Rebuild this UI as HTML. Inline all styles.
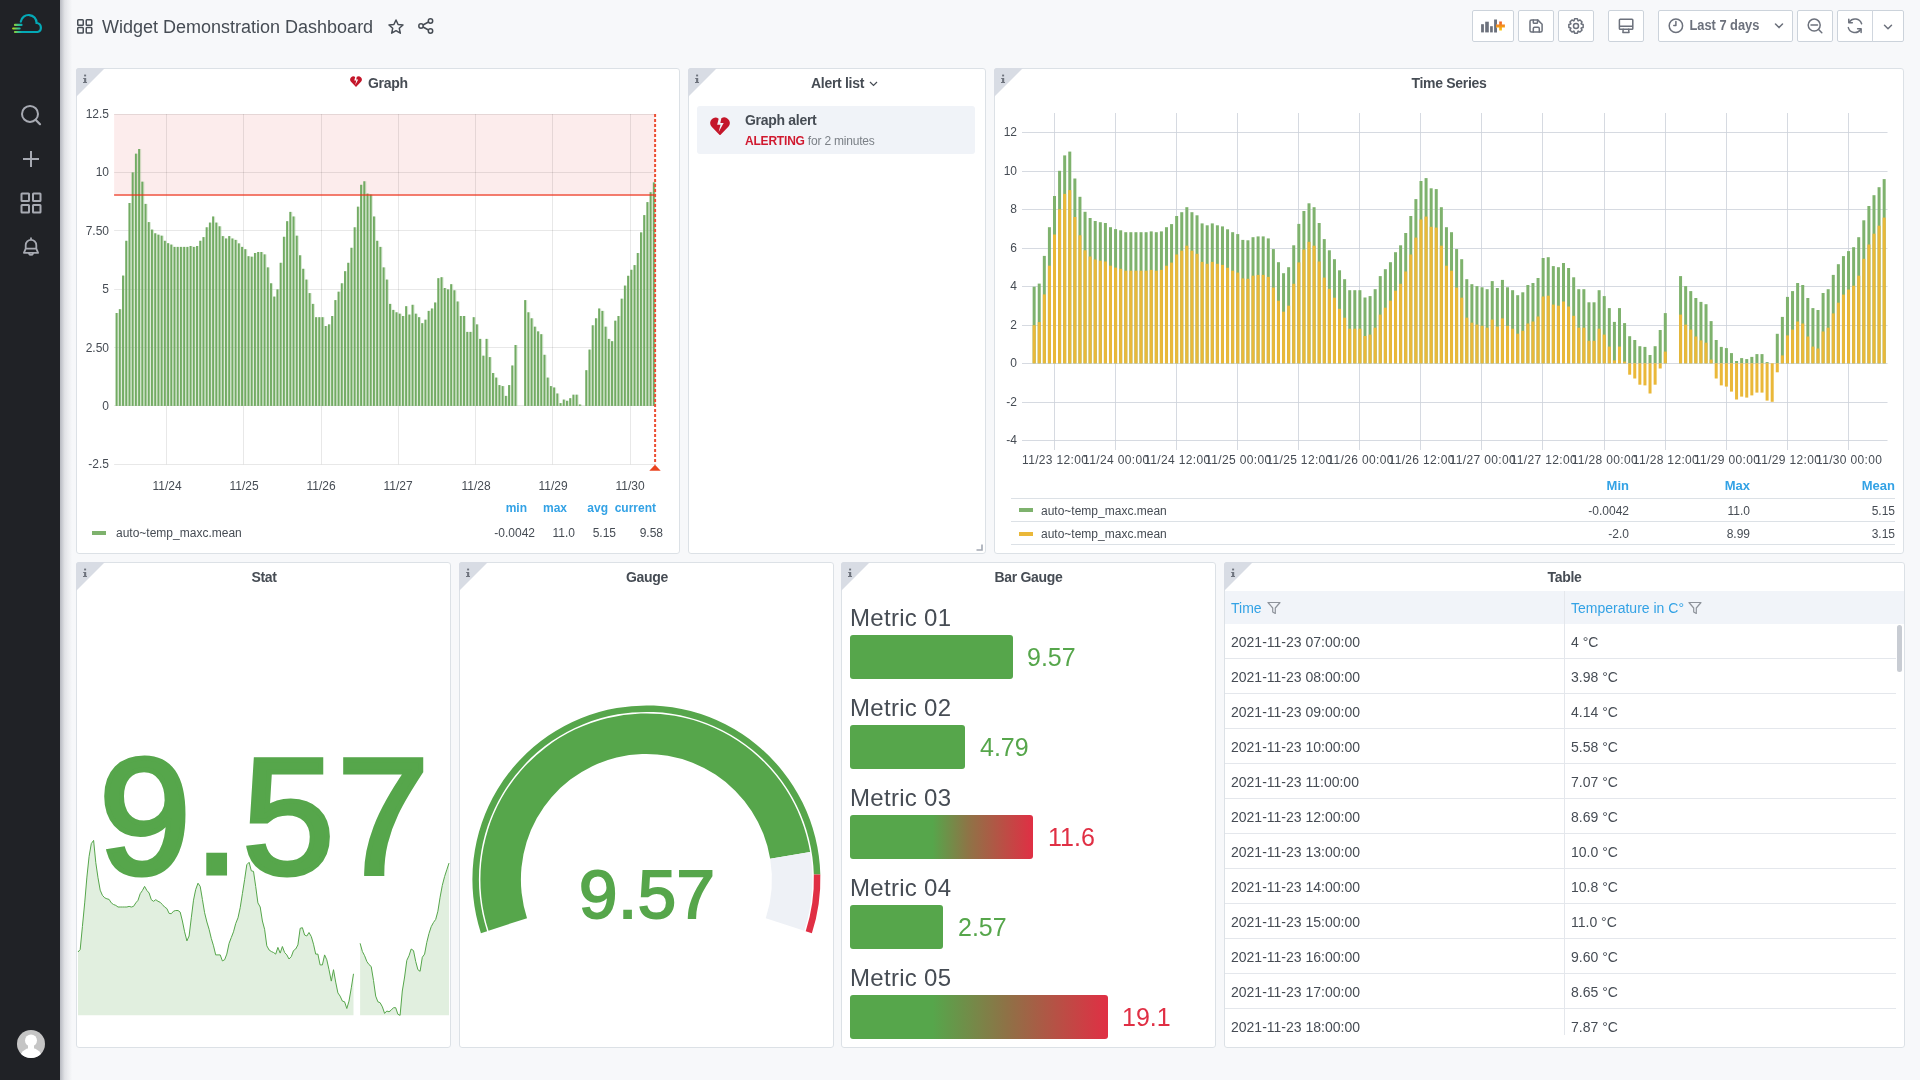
<!DOCTYPE html>
<html><head><meta charset="utf-8"><title>Widget Demonstration Dashboard</title>
<style>
*{box-sizing:border-box}
html,body{margin:0;padding:0;width:1920px;height:1080px;overflow:hidden;background:#f7f8fa;font-family:"Liberation Sans", sans-serif;color:#464c54}
#root{position:absolute;left:0;top:0;width:1920px;height:1080px;will-change:transform}
.abs{position:absolute}
.sidebar{position:absolute;left:0;top:0;width:60px;height:1080px;background:#202226}
.shadow{position:absolute;left:60px;top:0;width:12px;height:1080px;background:linear-gradient(to right,rgba(20,25,45,0.28),rgba(20,25,45,0.09) 40%,rgba(20,25,45,0))}
.panel{position:absolute;background:#fff;border:1px solid #dce1e6;border-radius:3px}
.corner{position:absolute;left:-1px;top:-1px;width:30px;height:30px}
.corner svg{position:absolute;left:0;top:0}
.ptitle{position:absolute;left:0;right:0;text-align:center;font-size:14px;font-weight:700;color:#464c54}
.tt{letter-spacing:-0.3px}
.btn{position:absolute;top:10px;height:32px;border:1px solid #ccd3db;border-radius:2px;background:#fff}
.t{position:absolute;white-space:pre}
</style></head><body><div id="root">

<div class="sidebar">
<svg class="abs" style="left:0;top:0" width="60" height="45" viewBox="0 0 60 45">
<defs><linearGradient id="lg" x1="13" y1="0" x2="22" y2="0" gradientUnits="userSpaceOnUse"><stop offset="0" stop-color="#b0d81a"/><stop offset="0.55" stop-color="#3cc48a"/><stop offset="1" stop-color="#04a9b6"/></linearGradient></defs>
<path d="M20.8 21.7 A7.95 7.95 0 0 1 36.6 23 A4.6 4.6 0 0 1 37.6 32 H22" fill="none" stroke="#04a9b6" stroke-width="2.2" stroke-linecap="round"/>
<path d="M15 32 H23 M15 24.9 H21.5 M13.2 28.5 H19.6" fill="none" stroke="url(#lg)" stroke-width="2.2" stroke-linecap="round"/>
</svg>
<svg class="abs" style="left:19px;top:104px" width="24" height="24" viewBox="0 0 24 24"><circle cx="11" cy="9.9" r="8" fill="none" stroke="#a7aab2" stroke-width="2"/><path d="M16.8 16 L21 20.2" stroke="#a7aab2" stroke-width="2.2" stroke-linecap="round"/></svg>
<svg class="abs" style="left:21px;top:149px" width="20" height="20" viewBox="0 0 20 20"><path d="M10 2 V18 M2 10 H18" stroke="#a7aab2" stroke-width="2"/></svg>
<svg class="abs" style="left:20px;top:192px" width="22" height="22" viewBox="0 0 22 22"><g fill="none" stroke="#a7aab2" stroke-width="2"><rect x="1.5" y="1.5" width="7.5" height="7.5" rx="0.5"/><rect x="13" y="1.5" width="7.5" height="7.5" rx="0.5"/><rect x="1.5" y="13" width="7.5" height="7.5" rx="0.5"/><rect x="13" y="13" width="7.5" height="7.5" rx="0.5"/></g></svg>
<svg class="abs" style="left:21px;top:236px" width="20" height="22" viewBox="0 0 20 22"><path d="M10 1.5 V3.8 M4.7 12.6 V9.2 A5.3 5.3 0 0 1 15.3 9.2 V12.6 M4.7 12.6 H15.3 L17.1 16.8 H2.9 Z M7.9 17.4 A2.2 2.2 0 0 0 12.1 17.4" fill="none" stroke="#a7aab2" stroke-width="1.8" stroke-linejoin="round"/></svg>
<svg class="abs" style="left:17px;top:1030px" width="28" height="28" viewBox="0 0 28 28"><defs><clipPath id="av"><circle cx="14" cy="14" r="14"/></clipPath></defs><circle cx="14" cy="14" r="14" fill="#c5c5c5"/><g clip-path="url(#av)" fill="#fff"><circle cx="14" cy="10.6" r="6"/><rect x="11" y="13" width="6" height="6"/><circle cx="14" cy="29.5" r="11.5"/></g></svg>
</div><div class="shadow"></div>
<svg class="abs" style="left:77px;top:19px" width="16" height="15" viewBox="0 0 16 15"><g fill="none" stroke="#464c54" stroke-width="1.5"><rect x="0.75" y="0.75" width="5.5" height="5.5" rx="0.8"/><rect x="9.25" y="0.75" width="5.5" height="5.5" rx="0.8"/><rect x="0.75" y="8.5" width="5.5" height="5.5" rx="0.8"/><rect x="9.25" y="8.5" width="5.5" height="5.5" rx="0.8"/></g></svg>
<div class="t" style="left:102px;top:15px;font-size:18px;line-height:24px;color:#464c54">Widget Demonstration Dashboard</div>
<svg class="abs" style="left:388px;top:19px" width="16" height="15" viewBox="0 0 16 15"><path d="M8 1 L10.1 5.5 L15 6 L11.3 9.3 L12.3 14.2 L8 11.7 L3.7 14.2 L4.7 9.3 L1 6 L5.9 5.5 Z" fill="none" stroke="#464c54" stroke-width="1.5" stroke-linejoin="round"/></svg>
<svg class="abs" style="left:418px;top:18px" width="16" height="16" viewBox="0 0 16 16"><g fill="none" stroke="#464c54" stroke-width="1.5"><circle cx="12.5" cy="3" r="2.2"/><circle cx="3" cy="8" r="2.2"/><circle cx="12.5" cy="13" r="2.2"/><path d="M5 7 L10.5 4 M5 9 L10.5 12"/></g></svg>
<div class="btn" style="left:1472px;width:42px"></div>
<div class="btn" style="left:1518px;width:36px"></div>
<div class="btn" style="left:1558px;width:36px"></div>
<div class="btn" style="left:1608px;width:36px"></div>
<div class="btn" style="left:1658px;width:135px"></div>
<div class="btn" style="left:1797px;width:36px"></div>
<div class="btn" style="left:1837px;width:67px"></div>
<div class="abs" style="left:1872px;top:10px;width:1px;height:32px;background:#d0d6de"></div>
<svg class="abs" style="left:0;top:0" width="1920" height="50" viewBox="0 0 1920 50">
<defs><linearGradient id="og" x1="0" y1="21.5" x2="0" y2="30.5" gradientUnits="userSpaceOnUse"><stop offset="0" stop-color="#f05a28"/><stop offset="0.5" stop-color="#f3901e"/><stop offset="1" stop-color="#fbca0a"/></linearGradient></defs>
<g fill="#6c717c"><rect x="1481.1" y="24.2" width="2.8" height="8.2"/><rect x="1485.2" y="21.7" width="3.6" height="10.7"/><rect x="1490.1" y="26.2" width="2.7" height="6.2"/><path d="M1494.1 19.4 H1497 V23.8 Q1495.6 26 1497 28.4 V32.4 H1494.1 Z"/></g>
<path d="M1499.2 21.6 H1501.9 V24.4 H1504.9 V27.6 H1501.9 V30.4 H1499.2 V27.6 H1496 V24.4 H1499.2 Z" fill="url(#og)"/>
<g fill="none" stroke="#6c717c" stroke-width="1.5" stroke-linejoin="round" stroke-linecap="round">
<path d="M1531.5 19.9 H1537.7 L1542.1 24.3 V30.6 Q1542.1 32.1 1540.6 32.1 H1531.5 Q1530 32.1 1530 30.6 V21.4 Q1530 19.9 1531.5 19.9 Z"/>
<path d="M1533.3 19.9 V22.5 Q1533.3 23.3 1534.1 23.3 H1536.7 Q1537.5 23.3 1537.5 22.5 V19.9"/>
<path d="M1533.3 32.1 V28.5 Q1533.3 27.3 1534.5 27.3 H1538.1 Q1539.3 27.3 1539.3 28.5 V32.1"/>
<path d="M1574.03 20.76 L1574.55 18.85 L1577.45 18.85 L1577.97 20.76 L1578.31 20.90 L1580.03 19.92 L1582.08 21.97 L1581.10 23.69 L1581.24 24.03 L1583.15 24.55 L1583.15 27.45 L1581.24 27.97 L1581.10 28.31 L1582.08 30.03 L1580.03 32.08 L1578.31 31.10 L1577.97 31.24 L1577.45 33.15 L1574.55 33.15 L1574.03 31.24 L1573.69 31.10 L1571.97 32.08 L1569.92 30.03 L1570.90 28.31 L1570.76 27.97 L1568.85 27.45 L1568.85 24.55 L1570.76 24.03 L1570.90 23.69 L1569.92 21.97 L1571.97 19.92 L1573.69 20.90 Z"/>
<circle cx="1576" cy="26" r="2.5"/>
<path d="M1620.2 19.2 H1632 Q1632.8 19.2 1632.8 20 V28.4 Q1632.8 29.2 1632 29.2 H1620.2 Q1619.4 29.2 1619.4 28.4 V20 Q1619.4 19.2 1620.2 19.2 Z M1619.4 26.3 H1632.8"/>
<path d="M1623.2 29.2 L1622.9 32.6 H1629 L1628.6 29.2"/>
<circle cx="1675.9" cy="25.8" r="6.7"/>
<path d="M1675.9 21.6 V25.4 H1673.8"/>
<path d="M1775.5 24 L1779 27.6 L1782.5 24"/>
<circle cx="1814.2" cy="25.1" r="6"/>
<path d="M1811 25.1 H1817.5 M1818.6 29.5 L1821.8 32.7"/>
<path d="M1861.6 23.8 A6.9 6.9 0 0 0 1849.3 22 M1848.3 27.6 A6.9 6.9 0 0 0 1860.6 29.5"/>
<path d="M1848.8 19.2 V22.8 H1852.3 M1861.1 32.4 V28.8 H1857.6"/>
<path d="M1884.5 25.3 L1888 28.7 L1891.5 25.3"/>
</g>
<text x="1689.4" y="30.1" font-family="Liberation Sans" font-weight="700" font-size="14" fill="#6c717c" textLength="70" lengthAdjust="spacingAndGlyphs">Last 7 days</text>
</svg>
<div class="panel" style="left:76px;top:68px;width:604px;height:486px"><div class="corner"><svg width="30" height="30" viewBox="0 0 30 30"><path d="M0 3 A3 3 0 0 1 3 0 H29 L0 29 Z" fill="#d8dce4"/><g fill="#6e737d"><rect x="8.1" y="6.6" width="2" height="1.8"/><path d="M7.2 10 H10.2 V14 H11 V15 H7 V14 H8.1 V11 H7.2 Z"/></g></svg></div>
</div>
<div class="t tt" style="left:368px;top:75px;font-size:14px;font-weight:700;line-height:16px">Graph</div>
<svg class="abs" style="left:350px;top:76px" width="12.0" height="11.0" viewBox="0 0 12 11"><path d="M6 11 L1 5.8 A3.1 3.1 0 0 1 1.2 1.2 A3.2 3.2 0 0 1 5.2 1 L4.3 4.6 L6.3 4.6 L5.2 9 L8.2 3.6 L6.2 3.6 L6.8 0.8 A3.2 3.2 0 0 1 10.8 1.2 A3.1 3.1 0 0 1 11 5.8 Z" fill="#c4162a"/></svg>
<svg class="abs" style="left:0;top:0" width="1920" height="1080" viewBox="0 0 1920 1080"><rect x="114.1" y="114.02499999999998" width="541.1999999999999" height="81.725" fill="rgba(234,112,112,0.13)"/><path d="M114.1 114.5 H655.3" stroke="rgba(0,0,0,0.09)" stroke-width="1"/><path d="M114.1 172.5 H655.3" stroke="rgba(0,0,0,0.09)" stroke-width="1"/><path d="M114.1 230.5 H655.3" stroke="rgba(0,0,0,0.09)" stroke-width="1"/><path d="M114.1 289.5 H655.3" stroke="rgba(0,0,0,0.09)" stroke-width="1"/><path d="M114.1 347.5 H655.3" stroke="rgba(0,0,0,0.09)" stroke-width="1"/><path d="M114.1 405.5 H655.3" stroke="rgba(0,0,0,0.09)" stroke-width="1"/><path d="M114.1 464.5 H655.3" stroke="rgba(0,0,0,0.09)" stroke-width="1"/><path d="M166.5 114.02499999999998 V464.275" stroke="rgba(0,0,0,0.09)" stroke-width="1"/><path d="M243.5 114.02499999999998 V464.275" stroke="rgba(0,0,0,0.09)" stroke-width="1"/><path d="M321.5 114.02499999999998 V464.275" stroke="rgba(0,0,0,0.09)" stroke-width="1"/><path d="M398.5 114.02499999999998 V464.275" stroke="rgba(0,0,0,0.09)" stroke-width="1"/><path d="M475.5 114.02499999999998 V464.275" stroke="rgba(0,0,0,0.09)" stroke-width="1"/><path d="M552.5 114.02499999999998 V464.275" stroke="rgba(0,0,0,0.09)" stroke-width="1"/><path d="M630.5 114.02499999999998 V464.275" stroke="rgba(0,0,0,0.09)" stroke-width="1"/><rect x="115.63" y="313.0" width="3.0" height="92.9" fill="rgba(126,178,109,0.3)"/><rect x="115.63" y="313.0" width="1.9" height="92.9" fill="#72ab63"/><rect x="118.85" y="309.2" width="3.0" height="96.7" fill="rgba(126,178,109,0.3)"/><rect x="118.85" y="309.2" width="1.9" height="96.7" fill="#72ab63"/><rect x="122.06" y="275.6" width="3.0" height="130.3" fill="rgba(126,178,109,0.3)"/><rect x="122.06" y="275.6" width="1.9" height="130.3" fill="#72ab63"/><rect x="125.28" y="240.8" width="3.0" height="165.1" fill="rgba(126,178,109,0.3)"/><rect x="125.28" y="240.8" width="1.9" height="165.1" fill="#72ab63"/><rect x="128.50" y="203.0" width="3.0" height="202.9" fill="rgba(126,178,109,0.3)"/><rect x="128.50" y="203.0" width="1.9" height="202.9" fill="#72ab63"/><rect x="131.71" y="172.4" width="3.0" height="233.5" fill="rgba(126,178,109,0.3)"/><rect x="131.71" y="172.4" width="1.9" height="233.5" fill="#72ab63"/><rect x="134.93" y="153.7" width="3.0" height="252.2" fill="rgba(126,178,109,0.3)"/><rect x="134.93" y="153.7" width="1.9" height="252.2" fill="#72ab63"/><rect x="138.15" y="149.0" width="3.0" height="256.9" fill="rgba(126,178,109,0.3)"/><rect x="138.15" y="149.0" width="1.9" height="256.9" fill="#72ab63"/><rect x="141.36" y="181.7" width="3.0" height="224.2" fill="rgba(126,178,109,0.3)"/><rect x="141.36" y="181.7" width="1.9" height="224.2" fill="#72ab63"/><rect x="144.58" y="203.9" width="3.0" height="202.0" fill="rgba(126,178,109,0.3)"/><rect x="144.58" y="203.9" width="1.9" height="202.0" fill="#72ab63"/><rect x="147.80" y="222.1" width="3.0" height="183.8" fill="rgba(126,178,109,0.3)"/><rect x="147.80" y="222.1" width="1.9" height="183.8" fill="#72ab63"/><rect x="151.01" y="229.6" width="3.0" height="176.3" fill="rgba(126,178,109,0.3)"/><rect x="151.01" y="229.6" width="1.9" height="176.3" fill="#72ab63"/><rect x="154.23" y="233.3" width="3.0" height="172.6" fill="rgba(126,178,109,0.3)"/><rect x="154.23" y="233.3" width="1.9" height="172.6" fill="#72ab63"/><rect x="157.45" y="234.7" width="3.0" height="171.2" fill="rgba(126,178,109,0.3)"/><rect x="157.45" y="234.7" width="1.9" height="171.2" fill="#72ab63"/><rect x="160.67" y="235.7" width="3.0" height="170.2" fill="rgba(126,178,109,0.3)"/><rect x="160.67" y="235.7" width="1.9" height="170.2" fill="#72ab63"/><rect x="163.88" y="240.8" width="3.0" height="165.1" fill="rgba(126,178,109,0.3)"/><rect x="163.88" y="240.8" width="1.9" height="165.1" fill="#72ab63"/><rect x="167.10" y="243.2" width="3.0" height="162.7" fill="rgba(126,178,109,0.3)"/><rect x="167.10" y="243.2" width="1.9" height="162.7" fill="#72ab63"/><rect x="170.32" y="244.6" width="3.0" height="161.3" fill="rgba(126,178,109,0.3)"/><rect x="170.32" y="244.6" width="1.9" height="161.3" fill="#72ab63"/><rect x="173.53" y="246.9" width="3.0" height="159.0" fill="rgba(126,178,109,0.3)"/><rect x="173.53" y="246.9" width="1.9" height="159.0" fill="#72ab63"/><rect x="176.75" y="246.9" width="3.0" height="159.0" fill="rgba(126,178,109,0.3)"/><rect x="176.75" y="246.9" width="1.9" height="159.0" fill="#72ab63"/><rect x="179.97" y="246.9" width="3.0" height="159.0" fill="rgba(126,178,109,0.3)"/><rect x="179.97" y="246.9" width="1.9" height="159.0" fill="#72ab63"/><rect x="183.19" y="246.9" width="3.0" height="159.0" fill="rgba(126,178,109,0.3)"/><rect x="183.19" y="246.9" width="1.9" height="159.0" fill="#72ab63"/><rect x="186.40" y="246.9" width="3.0" height="159.0" fill="rgba(126,178,109,0.3)"/><rect x="186.40" y="246.9" width="1.9" height="159.0" fill="#72ab63"/><rect x="189.62" y="246.0" width="3.0" height="159.9" fill="rgba(126,178,109,0.3)"/><rect x="189.62" y="246.0" width="1.9" height="159.9" fill="#72ab63"/><rect x="192.84" y="246.9" width="3.0" height="159.0" fill="rgba(126,178,109,0.3)"/><rect x="192.84" y="246.9" width="1.9" height="159.0" fill="#72ab63"/><rect x="196.05" y="246.0" width="3.0" height="159.9" fill="rgba(126,178,109,0.3)"/><rect x="196.05" y="246.0" width="1.9" height="159.9" fill="#72ab63"/><rect x="199.27" y="240.8" width="3.0" height="165.1" fill="rgba(126,178,109,0.3)"/><rect x="199.27" y="240.8" width="1.9" height="165.1" fill="#72ab63"/><rect x="202.49" y="237.1" width="3.0" height="168.8" fill="rgba(126,178,109,0.3)"/><rect x="202.49" y="237.1" width="1.9" height="168.8" fill="#72ab63"/><rect x="205.70" y="227.3" width="3.0" height="178.6" fill="rgba(126,178,109,0.3)"/><rect x="205.70" y="227.3" width="1.9" height="178.6" fill="#72ab63"/><rect x="208.92" y="222.6" width="3.0" height="183.3" fill="rgba(126,178,109,0.3)"/><rect x="208.92" y="222.6" width="1.9" height="183.3" fill="#72ab63"/><rect x="212.14" y="216.5" width="3.0" height="189.4" fill="rgba(126,178,109,0.3)"/><rect x="212.14" y="216.5" width="1.9" height="189.4" fill="#72ab63"/><rect x="215.35" y="222.6" width="3.0" height="183.3" fill="rgba(126,178,109,0.3)"/><rect x="215.35" y="222.6" width="1.9" height="183.3" fill="#72ab63"/><rect x="218.57" y="226.3" width="3.0" height="179.6" fill="rgba(126,178,109,0.3)"/><rect x="218.57" y="226.3" width="1.9" height="179.6" fill="#72ab63"/><rect x="221.79" y="236.1" width="3.0" height="169.8" fill="rgba(126,178,109,0.3)"/><rect x="221.79" y="236.1" width="1.9" height="169.8" fill="#72ab63"/><rect x="225.01" y="238.5" width="3.0" height="167.4" fill="rgba(126,178,109,0.3)"/><rect x="225.01" y="238.5" width="1.9" height="167.4" fill="#72ab63"/><rect x="228.22" y="236.1" width="3.0" height="169.8" fill="rgba(126,178,109,0.3)"/><rect x="228.22" y="236.1" width="1.9" height="169.8" fill="#72ab63"/><rect x="231.44" y="238.5" width="3.0" height="167.4" fill="rgba(126,178,109,0.3)"/><rect x="231.44" y="238.5" width="1.9" height="167.4" fill="#72ab63"/><rect x="234.66" y="239.9" width="3.0" height="166.0" fill="rgba(126,178,109,0.3)"/><rect x="234.66" y="239.9" width="1.9" height="166.0" fill="#72ab63"/><rect x="237.87" y="243.4" width="3.0" height="162.5" fill="rgba(126,178,109,0.3)"/><rect x="237.87" y="243.4" width="1.9" height="162.5" fill="#72ab63"/><rect x="241.09" y="246.9" width="3.0" height="159.0" fill="rgba(126,178,109,0.3)"/><rect x="241.09" y="246.9" width="1.9" height="159.0" fill="#72ab63"/><rect x="244.31" y="249.2" width="3.0" height="156.7" fill="rgba(126,178,109,0.3)"/><rect x="244.31" y="249.2" width="1.9" height="156.7" fill="#72ab63"/><rect x="247.52" y="256.2" width="3.0" height="149.7" fill="rgba(126,178,109,0.3)"/><rect x="247.52" y="256.2" width="1.9" height="149.7" fill="#72ab63"/><rect x="250.74" y="256.7" width="3.0" height="149.2" fill="rgba(126,178,109,0.3)"/><rect x="250.74" y="256.7" width="1.9" height="149.2" fill="#72ab63"/><rect x="253.96" y="253.0" width="3.0" height="152.9" fill="rgba(126,178,109,0.3)"/><rect x="253.96" y="253.0" width="1.9" height="152.9" fill="#72ab63"/><rect x="257.18" y="252.0" width="3.0" height="153.9" fill="rgba(126,178,109,0.3)"/><rect x="257.18" y="252.0" width="1.9" height="153.9" fill="#72ab63"/><rect x="260.39" y="252.0" width="3.0" height="153.9" fill="rgba(126,178,109,0.3)"/><rect x="260.39" y="252.0" width="1.9" height="153.9" fill="#72ab63"/><rect x="263.61" y="254.4" width="3.0" height="151.5" fill="rgba(126,178,109,0.3)"/><rect x="263.61" y="254.4" width="1.9" height="151.5" fill="#72ab63"/><rect x="266.83" y="267.4" width="3.0" height="138.5" fill="rgba(126,178,109,0.3)"/><rect x="266.83" y="267.4" width="1.9" height="138.5" fill="#72ab63"/><rect x="270.04" y="283.3" width="3.0" height="122.6" fill="rgba(126,178,109,0.3)"/><rect x="270.04" y="283.3" width="1.9" height="122.6" fill="#72ab63"/><rect x="273.26" y="296.6" width="3.0" height="109.3" fill="rgba(126,178,109,0.3)"/><rect x="273.26" y="296.6" width="1.9" height="109.3" fill="#72ab63"/><rect x="276.48" y="289.4" width="3.0" height="116.5" fill="rgba(126,178,109,0.3)"/><rect x="276.48" y="289.4" width="1.9" height="116.5" fill="#72ab63"/><rect x="279.69" y="262.8" width="3.0" height="143.1" fill="rgba(126,178,109,0.3)"/><rect x="279.69" y="262.8" width="1.9" height="143.1" fill="#72ab63"/><rect x="282.91" y="236.8" width="3.0" height="169.1" fill="rgba(126,178,109,0.3)"/><rect x="282.91" y="236.8" width="1.9" height="169.1" fill="#72ab63"/><rect x="286.13" y="221.2" width="3.0" height="184.7" fill="rgba(126,178,109,0.3)"/><rect x="286.13" y="221.2" width="1.9" height="184.7" fill="#72ab63"/><rect x="289.35" y="211.9" width="3.0" height="194.0" fill="rgba(126,178,109,0.3)"/><rect x="289.35" y="211.9" width="1.9" height="194.0" fill="#72ab63"/><rect x="292.56" y="216.5" width="3.0" height="189.4" fill="rgba(126,178,109,0.3)"/><rect x="292.56" y="216.5" width="1.9" height="189.4" fill="#72ab63"/><rect x="295.78" y="235.7" width="3.0" height="170.2" fill="rgba(126,178,109,0.3)"/><rect x="295.78" y="235.7" width="1.9" height="170.2" fill="#72ab63"/><rect x="299.00" y="255.3" width="3.0" height="150.6" fill="rgba(126,178,109,0.3)"/><rect x="299.00" y="255.3" width="1.9" height="150.6" fill="#72ab63"/><rect x="302.21" y="268.8" width="3.0" height="137.1" fill="rgba(126,178,109,0.3)"/><rect x="302.21" y="268.8" width="1.9" height="137.1" fill="#72ab63"/><rect x="305.43" y="279.6" width="3.0" height="126.3" fill="rgba(126,178,109,0.3)"/><rect x="305.43" y="279.6" width="1.9" height="126.3" fill="#72ab63"/><rect x="308.65" y="293.1" width="3.0" height="112.8" fill="rgba(126,178,109,0.3)"/><rect x="308.65" y="293.1" width="1.9" height="112.8" fill="#72ab63"/><rect x="311.87" y="303.9" width="3.0" height="102.0" fill="rgba(126,178,109,0.3)"/><rect x="311.87" y="303.9" width="1.9" height="102.0" fill="#72ab63"/><rect x="315.08" y="317.2" width="3.0" height="88.7" fill="rgba(126,178,109,0.3)"/><rect x="315.08" y="317.2" width="1.9" height="88.7" fill="#72ab63"/><rect x="318.30" y="317.2" width="3.0" height="88.7" fill="rgba(126,178,109,0.3)"/><rect x="318.30" y="317.2" width="1.9" height="88.7" fill="#72ab63"/><rect x="321.52" y="317.2" width="3.0" height="88.7" fill="rgba(126,178,109,0.3)"/><rect x="321.52" y="317.2" width="1.9" height="88.7" fill="#72ab63"/><rect x="324.73" y="326.0" width="3.0" height="79.9" fill="rgba(126,178,109,0.3)"/><rect x="324.73" y="326.0" width="1.9" height="79.9" fill="#72ab63"/><rect x="327.95" y="324.4" width="3.0" height="81.5" fill="rgba(126,178,109,0.3)"/><rect x="327.95" y="324.4" width="1.9" height="81.5" fill="#72ab63"/><rect x="331.17" y="316.0" width="3.0" height="89.9" fill="rgba(126,178,109,0.3)"/><rect x="331.17" y="316.0" width="1.9" height="89.9" fill="#72ab63"/><rect x="334.38" y="300.1" width="3.0" height="105.8" fill="rgba(126,178,109,0.3)"/><rect x="334.38" y="300.1" width="1.9" height="105.8" fill="#72ab63"/><rect x="337.60" y="291.7" width="3.0" height="114.2" fill="rgba(126,178,109,0.3)"/><rect x="337.60" y="291.7" width="1.9" height="114.2" fill="#72ab63"/><rect x="340.82" y="283.3" width="3.0" height="122.6" fill="rgba(126,178,109,0.3)"/><rect x="340.82" y="283.3" width="1.9" height="122.6" fill="#72ab63"/><rect x="344.04" y="271.2" width="3.0" height="134.7" fill="rgba(126,178,109,0.3)"/><rect x="344.04" y="271.2" width="1.9" height="134.7" fill="#72ab63"/><rect x="347.25" y="262.8" width="3.0" height="143.1" fill="rgba(126,178,109,0.3)"/><rect x="347.25" y="262.8" width="1.9" height="143.1" fill="#72ab63"/><rect x="350.47" y="247.8" width="3.0" height="158.1" fill="rgba(126,178,109,0.3)"/><rect x="350.47" y="247.8" width="1.9" height="158.1" fill="#72ab63"/><rect x="353.69" y="227.3" width="3.0" height="178.6" fill="rgba(126,178,109,0.3)"/><rect x="353.69" y="227.3" width="1.9" height="178.6" fill="#72ab63"/><rect x="356.90" y="206.7" width="3.0" height="199.2" fill="rgba(126,178,109,0.3)"/><rect x="356.90" y="206.7" width="1.9" height="199.2" fill="#72ab63"/><rect x="360.12" y="184.8" width="3.0" height="221.1" fill="rgba(126,178,109,0.3)"/><rect x="360.12" y="184.8" width="1.9" height="221.1" fill="#72ab63"/><rect x="363.34" y="181.3" width="3.0" height="224.6" fill="rgba(126,178,109,0.3)"/><rect x="363.34" y="181.3" width="1.9" height="224.6" fill="#72ab63"/><rect x="366.55" y="193.6" width="3.0" height="212.3" fill="rgba(126,178,109,0.3)"/><rect x="366.55" y="193.6" width="1.9" height="212.3" fill="#72ab63"/><rect x="369.77" y="194.6" width="3.0" height="211.3" fill="rgba(126,178,109,0.3)"/><rect x="369.77" y="194.6" width="1.9" height="211.3" fill="#72ab63"/><rect x="372.99" y="216.5" width="3.0" height="189.4" fill="rgba(126,178,109,0.3)"/><rect x="372.99" y="216.5" width="1.9" height="189.4" fill="#72ab63"/><rect x="376.20" y="240.8" width="3.0" height="165.1" fill="rgba(126,178,109,0.3)"/><rect x="376.20" y="240.8" width="1.9" height="165.1" fill="#72ab63"/><rect x="379.42" y="246.9" width="3.0" height="159.0" fill="rgba(126,178,109,0.3)"/><rect x="379.42" y="246.9" width="1.9" height="159.0" fill="#72ab63"/><rect x="382.64" y="267.4" width="3.0" height="138.5" fill="rgba(126,178,109,0.3)"/><rect x="382.64" y="267.4" width="1.9" height="138.5" fill="#72ab63"/><rect x="385.86" y="279.6" width="3.0" height="126.3" fill="rgba(126,178,109,0.3)"/><rect x="385.86" y="279.6" width="1.9" height="126.3" fill="#72ab63"/><rect x="389.07" y="303.9" width="3.0" height="102.0" fill="rgba(126,178,109,0.3)"/><rect x="389.07" y="303.9" width="1.9" height="102.0" fill="#72ab63"/><rect x="392.29" y="309.9" width="3.0" height="96.0" fill="rgba(126,178,109,0.3)"/><rect x="392.29" y="309.9" width="1.9" height="96.0" fill="#72ab63"/><rect x="395.51" y="312.3" width="3.0" height="93.6" fill="rgba(126,178,109,0.3)"/><rect x="395.51" y="312.3" width="1.9" height="93.6" fill="#72ab63"/><rect x="398.72" y="313.7" width="3.0" height="92.2" fill="rgba(126,178,109,0.3)"/><rect x="398.72" y="313.7" width="1.9" height="92.2" fill="#72ab63"/><rect x="401.94" y="316.0" width="3.0" height="89.9" fill="rgba(126,178,109,0.3)"/><rect x="401.94" y="316.0" width="1.9" height="89.9" fill="#72ab63"/><rect x="405.16" y="306.2" width="3.0" height="99.7" fill="rgba(126,178,109,0.3)"/><rect x="405.16" y="306.2" width="1.9" height="99.7" fill="#72ab63"/><rect x="408.38" y="314.6" width="3.0" height="91.3" fill="rgba(126,178,109,0.3)"/><rect x="408.38" y="314.6" width="1.9" height="91.3" fill="#72ab63"/><rect x="411.59" y="304.8" width="3.0" height="101.1" fill="rgba(126,178,109,0.3)"/><rect x="411.59" y="304.8" width="1.9" height="101.1" fill="#72ab63"/><rect x="414.81" y="313.7" width="3.0" height="92.2" fill="rgba(126,178,109,0.3)"/><rect x="414.81" y="313.7" width="1.9" height="92.2" fill="#72ab63"/><rect x="418.03" y="317.2" width="3.0" height="88.7" fill="rgba(126,178,109,0.3)"/><rect x="418.03" y="317.2" width="1.9" height="88.7" fill="#72ab63"/><rect x="421.24" y="323.2" width="3.0" height="82.7" fill="rgba(126,178,109,0.3)"/><rect x="421.24" y="323.2" width="1.9" height="82.7" fill="#72ab63"/><rect x="424.46" y="319.7" width="3.0" height="86.2" fill="rgba(126,178,109,0.3)"/><rect x="424.46" y="319.7" width="1.9" height="86.2" fill="#72ab63"/><rect x="427.68" y="310.9" width="3.0" height="95.0" fill="rgba(126,178,109,0.3)"/><rect x="427.68" y="310.9" width="1.9" height="95.0" fill="#72ab63"/><rect x="430.89" y="308.5" width="3.0" height="97.4" fill="rgba(126,178,109,0.3)"/><rect x="430.89" y="308.5" width="1.9" height="97.4" fill="#72ab63"/><rect x="434.11" y="302.5" width="3.0" height="103.4" fill="rgba(126,178,109,0.3)"/><rect x="434.11" y="302.5" width="1.9" height="103.4" fill="#72ab63"/><rect x="437.33" y="278.2" width="3.0" height="127.7" fill="rgba(126,178,109,0.3)"/><rect x="437.33" y="278.2" width="1.9" height="127.7" fill="#72ab63"/><rect x="440.55" y="277.2" width="3.0" height="128.7" fill="rgba(126,178,109,0.3)"/><rect x="440.55" y="277.2" width="1.9" height="128.7" fill="#72ab63"/><rect x="443.76" y="288.0" width="3.0" height="117.9" fill="rgba(126,178,109,0.3)"/><rect x="443.76" y="288.0" width="1.9" height="117.9" fill="#72ab63"/><rect x="446.98" y="289.4" width="3.0" height="116.5" fill="rgba(126,178,109,0.3)"/><rect x="446.98" y="289.4" width="1.9" height="116.5" fill="#72ab63"/><rect x="450.20" y="284.2" width="3.0" height="121.7" fill="rgba(126,178,109,0.3)"/><rect x="450.20" y="284.2" width="1.9" height="121.7" fill="#72ab63"/><rect x="453.41" y="290.3" width="3.0" height="115.6" fill="rgba(126,178,109,0.3)"/><rect x="453.41" y="290.3" width="1.9" height="115.6" fill="#72ab63"/><rect x="456.63" y="301.5" width="3.0" height="104.4" fill="rgba(126,178,109,0.3)"/><rect x="456.63" y="301.5" width="1.9" height="104.4" fill="#72ab63"/><rect x="459.85" y="316.0" width="3.0" height="89.9" fill="rgba(126,178,109,0.3)"/><rect x="459.85" y="316.0" width="1.9" height="89.9" fill="#72ab63"/><rect x="463.06" y="316.0" width="3.0" height="89.9" fill="rgba(126,178,109,0.3)"/><rect x="463.06" y="316.0" width="1.9" height="89.9" fill="#72ab63"/><rect x="466.28" y="331.9" width="3.0" height="74.0" fill="rgba(126,178,109,0.3)"/><rect x="466.28" y="331.9" width="1.9" height="74.0" fill="#72ab63"/><rect x="469.50" y="331.9" width="3.0" height="74.0" fill="rgba(126,178,109,0.3)"/><rect x="469.50" y="331.9" width="1.9" height="74.0" fill="#72ab63"/><rect x="472.71" y="317.2" width="3.0" height="88.7" fill="rgba(126,178,109,0.3)"/><rect x="472.71" y="317.2" width="1.9" height="88.7" fill="#72ab63"/><rect x="475.93" y="324.4" width="3.0" height="81.5" fill="rgba(126,178,109,0.3)"/><rect x="475.93" y="324.4" width="1.9" height="81.5" fill="#72ab63"/><rect x="479.15" y="338.9" width="3.0" height="67.0" fill="rgba(126,178,109,0.3)"/><rect x="479.15" y="338.9" width="1.9" height="67.0" fill="#72ab63"/><rect x="482.37" y="355.7" width="3.0" height="50.2" fill="rgba(126,178,109,0.3)"/><rect x="482.37" y="355.7" width="1.9" height="50.2" fill="#72ab63"/><rect x="485.58" y="338.9" width="3.0" height="67.0" fill="rgba(126,178,109,0.3)"/><rect x="485.58" y="338.9" width="1.9" height="67.0" fill="#72ab63"/><rect x="488.80" y="357.1" width="3.0" height="48.8" fill="rgba(126,178,109,0.3)"/><rect x="488.80" y="357.1" width="1.9" height="48.8" fill="#72ab63"/><rect x="492.02" y="373.0" width="3.0" height="32.9" fill="rgba(126,178,109,0.3)"/><rect x="492.02" y="373.0" width="1.9" height="32.9" fill="#72ab63"/><rect x="495.23" y="377.6" width="3.0" height="28.3" fill="rgba(126,178,109,0.3)"/><rect x="495.23" y="377.6" width="1.9" height="28.3" fill="#72ab63"/><rect x="498.45" y="385.1" width="3.0" height="20.8" fill="rgba(126,178,109,0.3)"/><rect x="498.45" y="385.1" width="1.9" height="20.8" fill="#72ab63"/><rect x="501.67" y="386.1" width="3.0" height="19.8" fill="rgba(126,178,109,0.3)"/><rect x="501.67" y="386.1" width="1.9" height="19.8" fill="#72ab63"/><rect x="504.89" y="395.9" width="3.0" height="10.0" fill="rgba(126,178,109,0.3)"/><rect x="504.89" y="395.9" width="1.9" height="10.0" fill="#72ab63"/><rect x="508.10" y="385.1" width="3.0" height="20.8" fill="rgba(126,178,109,0.3)"/><rect x="508.10" y="385.1" width="1.9" height="20.8" fill="#72ab63"/><rect x="511.32" y="365.5" width="3.0" height="40.4" fill="rgba(126,178,109,0.3)"/><rect x="511.32" y="365.5" width="1.9" height="40.4" fill="#72ab63"/><rect x="514.54" y="345.0" width="3.0" height="60.9" fill="rgba(126,178,109,0.3)"/><rect x="514.54" y="345.0" width="1.9" height="60.9" fill="#72ab63"/><rect x="524.19" y="300.1" width="3.0" height="105.8" fill="rgba(126,178,109,0.3)"/><rect x="524.19" y="300.1" width="1.9" height="105.8" fill="#72ab63"/><rect x="527.40" y="312.3" width="3.0" height="93.6" fill="rgba(126,178,109,0.3)"/><rect x="527.40" y="312.3" width="1.9" height="93.6" fill="#72ab63"/><rect x="530.62" y="318.3" width="3.0" height="87.6" fill="rgba(126,178,109,0.3)"/><rect x="530.62" y="318.3" width="1.9" height="87.6" fill="#72ab63"/><rect x="533.84" y="326.7" width="3.0" height="79.2" fill="rgba(126,178,109,0.3)"/><rect x="533.84" y="326.7" width="1.9" height="79.2" fill="#72ab63"/><rect x="537.06" y="331.4" width="3.0" height="74.5" fill="rgba(126,178,109,0.3)"/><rect x="537.06" y="331.4" width="1.9" height="74.5" fill="#72ab63"/><rect x="540.27" y="334.2" width="3.0" height="71.7" fill="rgba(126,178,109,0.3)"/><rect x="540.27" y="334.2" width="1.9" height="71.7" fill="#72ab63"/><rect x="543.49" y="354.8" width="3.0" height="51.1" fill="rgba(126,178,109,0.3)"/><rect x="543.49" y="354.8" width="1.9" height="51.1" fill="#72ab63"/><rect x="546.71" y="377.6" width="3.0" height="28.3" fill="rgba(126,178,109,0.3)"/><rect x="546.71" y="377.6" width="1.9" height="28.3" fill="#72ab63"/><rect x="549.92" y="386.1" width="3.0" height="19.8" fill="rgba(126,178,109,0.3)"/><rect x="549.92" y="386.1" width="1.9" height="19.8" fill="#72ab63"/><rect x="553.14" y="387.5" width="3.0" height="18.4" fill="rgba(126,178,109,0.3)"/><rect x="553.14" y="387.5" width="1.9" height="18.4" fill="#72ab63"/><rect x="556.36" y="393.5" width="3.0" height="12.4" fill="rgba(126,178,109,0.3)"/><rect x="556.36" y="393.5" width="1.9" height="12.4" fill="#72ab63"/><rect x="559.57" y="403.1" width="3.0" height="2.8" fill="rgba(126,178,109,0.3)"/><rect x="559.57" y="403.1" width="1.9" height="2.8" fill="#72ab63"/><rect x="562.79" y="399.6" width="3.0" height="6.3" fill="rgba(126,178,109,0.3)"/><rect x="562.79" y="399.6" width="1.9" height="6.3" fill="#72ab63"/><rect x="566.01" y="400.8" width="3.0" height="5.1" fill="rgba(126,178,109,0.3)"/><rect x="566.01" y="400.8" width="1.9" height="5.1" fill="#72ab63"/><rect x="569.23" y="398.2" width="3.0" height="7.7" fill="rgba(126,178,109,0.3)"/><rect x="569.23" y="398.2" width="1.9" height="7.7" fill="#72ab63"/><rect x="572.44" y="394.7" width="3.0" height="11.2" fill="rgba(126,178,109,0.3)"/><rect x="572.44" y="394.7" width="1.9" height="11.2" fill="#72ab63"/><rect x="575.66" y="394.7" width="3.0" height="11.2" fill="rgba(126,178,109,0.3)"/><rect x="575.66" y="394.7" width="1.9" height="11.2" fill="#72ab63"/><rect x="578.88" y="404.5" width="3.0" height="1.4" fill="rgba(126,178,109,0.3)"/><rect x="578.88" y="404.5" width="1.9" height="1.4" fill="#72ab63"/><rect x="582.09" y="405.9" width="3.0" height="0.0" fill="rgba(126,178,109,0.3)"/><rect x="582.09" y="405.9" width="1.9" height="0.0" fill="#72ab63"/><rect x="585.31" y="370.2" width="3.0" height="35.7" fill="rgba(126,178,109,0.3)"/><rect x="585.31" y="370.2" width="1.9" height="35.7" fill="#72ab63"/><rect x="588.53" y="349.6" width="3.0" height="56.3" fill="rgba(126,178,109,0.3)"/><rect x="588.53" y="349.6" width="1.9" height="56.3" fill="#72ab63"/><rect x="591.74" y="325.3" width="3.0" height="80.6" fill="rgba(126,178,109,0.3)"/><rect x="591.74" y="325.3" width="1.9" height="80.6" fill="#72ab63"/><rect x="594.96" y="318.3" width="3.0" height="87.6" fill="rgba(126,178,109,0.3)"/><rect x="594.96" y="318.3" width="1.9" height="87.6" fill="#72ab63"/><rect x="598.18" y="308.5" width="3.0" height="97.4" fill="rgba(126,178,109,0.3)"/><rect x="598.18" y="308.5" width="1.9" height="97.4" fill="#72ab63"/><rect x="601.40" y="310.9" width="3.0" height="95.0" fill="rgba(126,178,109,0.3)"/><rect x="601.40" y="310.9" width="1.9" height="95.0" fill="#72ab63"/><rect x="604.61" y="326.7" width="3.0" height="79.2" fill="rgba(126,178,109,0.3)"/><rect x="604.61" y="326.7" width="1.9" height="79.2" fill="#72ab63"/><rect x="607.83" y="338.9" width="3.0" height="67.0" fill="rgba(126,178,109,0.3)"/><rect x="607.83" y="338.9" width="1.9" height="67.0" fill="#72ab63"/><rect x="611.05" y="341.2" width="3.0" height="64.7" fill="rgba(126,178,109,0.3)"/><rect x="611.05" y="341.2" width="1.9" height="64.7" fill="#72ab63"/><rect x="614.26" y="320.7" width="3.0" height="85.2" fill="rgba(126,178,109,0.3)"/><rect x="614.26" y="320.7" width="1.9" height="85.2" fill="#72ab63"/><rect x="617.48" y="316.0" width="3.0" height="89.9" fill="rgba(126,178,109,0.3)"/><rect x="617.48" y="316.0" width="1.9" height="89.9" fill="#72ab63"/><rect x="620.70" y="298.7" width="3.0" height="107.2" fill="rgba(126,178,109,0.3)"/><rect x="620.70" y="298.7" width="1.9" height="107.2" fill="#72ab63"/><rect x="623.91" y="285.6" width="3.0" height="120.3" fill="rgba(126,178,109,0.3)"/><rect x="623.91" y="285.6" width="1.9" height="120.3" fill="#72ab63"/><rect x="627.13" y="275.8" width="3.0" height="130.1" fill="rgba(126,178,109,0.3)"/><rect x="627.13" y="275.8" width="1.9" height="130.1" fill="#72ab63"/><rect x="630.35" y="269.8" width="3.0" height="136.1" fill="rgba(126,178,109,0.3)"/><rect x="630.35" y="269.8" width="1.9" height="136.1" fill="#72ab63"/><rect x="633.57" y="265.1" width="3.0" height="140.8" fill="rgba(126,178,109,0.3)"/><rect x="633.57" y="265.1" width="1.9" height="140.8" fill="#72ab63"/><rect x="636.78" y="253.0" width="3.0" height="152.9" fill="rgba(126,178,109,0.3)"/><rect x="636.78" y="253.0" width="1.9" height="152.9" fill="#72ab63"/><rect x="640.00" y="232.4" width="3.0" height="173.5" fill="rgba(126,178,109,0.3)"/><rect x="640.00" y="232.4" width="1.9" height="173.5" fill="#72ab63"/><rect x="643.22" y="215.1" width="3.0" height="190.8" fill="rgba(126,178,109,0.3)"/><rect x="643.22" y="215.1" width="1.9" height="190.8" fill="#72ab63"/><rect x="646.43" y="202.1" width="3.0" height="203.8" fill="rgba(126,178,109,0.3)"/><rect x="646.43" y="202.1" width="1.9" height="203.8" fill="#72ab63"/><rect x="649.65" y="192.2" width="3.0" height="213.7" fill="rgba(126,178,109,0.3)"/><rect x="649.65" y="192.2" width="1.9" height="213.7" fill="#72ab63"/><rect x="652.87" y="182.4" width="3.0" height="223.5" fill="rgba(126,178,109,0.3)"/><rect x="652.87" y="182.4" width="1.9" height="223.5" fill="#72ab63"/><path d="M114.1 195.0 H655.3" stroke="rgba(237,46,24,0.6)" stroke-width="2"/><path d="M655.1 114.02499999999998 V464.275" stroke="#ec4e33" stroke-width="2" stroke-dasharray="3,2"/><path d="M649.3 470.8 L655 464.8 L660.7 470.8 Z" fill="#ea4420"/></svg>
<div class="t" style="right:1811px;top:107px;font-size:12px;line-height:14px;color:#464c54">12.5</div>
<div class="t" style="right:1811px;top:165px;font-size:12px;line-height:14px;color:#464c54">10</div>
<div class="t" style="right:1811px;top:224px;font-size:12px;line-height:14px;color:#464c54">7.50</div>
<div class="t" style="right:1811px;top:282px;font-size:12px;line-height:14px;color:#464c54">5</div>
<div class="t" style="right:1811px;top:341px;font-size:12px;line-height:14px;color:#464c54">2.50</div>
<div class="t" style="right:1811px;top:399px;font-size:12px;line-height:14px;color:#464c54">0</div>
<div class="t" style="right:1811px;top:457px;font-size:12px;line-height:14px;color:#464c54">-2.5</div>
<div class="t" style="left:137px;width:60px;text-align:center;top:479px;font-size:12px;line-height:14px;color:#464c54">11/24</div>
<div class="t" style="left:214px;width:60px;text-align:center;top:479px;font-size:12px;line-height:14px;color:#464c54">11/25</div>
<div class="t" style="left:291px;width:60px;text-align:center;top:479px;font-size:12px;line-height:14px;color:#464c54">11/26</div>
<div class="t" style="left:368px;width:60px;text-align:center;top:479px;font-size:12px;line-height:14px;color:#464c54">11/27</div>
<div class="t" style="left:446px;width:60px;text-align:center;top:479px;font-size:12px;line-height:14px;color:#464c54">11/28</div>
<div class="t" style="left:523px;width:60px;text-align:center;top:479px;font-size:12px;line-height:14px;color:#464c54">11/29</div>
<div class="t" style="left:600px;width:60px;text-align:center;top:479px;font-size:12px;line-height:14px;color:#464c54">11/30</div>
<div class="t" style="right:1393px;top:501px;font-size:12px;font-weight:700;line-height:14px;color:#33a2e5">min</div>
<div class="t" style="right:1353px;top:501px;font-size:12px;font-weight:700;line-height:14px;color:#33a2e5">max</div>
<div class="t" style="right:1312px;top:501px;font-size:12px;font-weight:700;line-height:14px;color:#33a2e5">avg</div>
<div class="t" style="right:1264px;top:501px;font-size:12px;font-weight:700;line-height:14px;color:#33a2e5">current</div>
<div class="t" style="right:1385px;top:526px;font-size:12px;line-height:14px;color:#464c54">-0.0042</div>
<div class="t" style="right:1345px;top:526px;font-size:12px;line-height:14px;color:#464c54">11.0</div>
<div class="t" style="right:1304px;top:526px;font-size:12px;line-height:14px;color:#464c54">5.15</div>
<div class="t" style="right:1257px;top:526px;font-size:12px;line-height:14px;color:#464c54">9.58</div>
<div class="abs" style="left:92px;top:531px;width:14px;height:4px;background:#7eb26d"></div>
<div class="t" style="left:116px;top:526px;font-size:12px;line-height:14px;color:#464c54">auto~temp_maxc.mean</div>
<div class="panel" style="left:688px;top:68px;width:298px;height:486px"><div class="corner"><svg width="30" height="30" viewBox="0 0 30 30"><path d="M0 3 A3 3 0 0 1 3 0 H29 L0 29 Z" fill="#d8dce4"/><g fill="#6e737d"><rect x="8.1" y="6.6" width="2" height="1.8"/><path d="M7.2 10 H10.2 V14 H11 V15 H7 V14 H8.1 V11 H7.2 Z"/></g></svg></div><svg class="abs" style="right:2px;bottom:2px" width="7" height="7" viewBox="0 0 7 7"><path d="M6 0.5 V6 H0.5" fill="none" stroke="#a2a8b3" stroke-width="1.6"/></svg>
</div>
<div class="t tt" style="left:811px;top:75px;font-size:14px;font-weight:700;line-height:16px">Alert list</div>
<svg class="abs" style="left:869px;top:81px" width="9" height="6" viewBox="0 0 9 6"><path d="M1 1 L4.5 4.5 L8 1" fill="none" stroke="#464c54" stroke-width="1.2"/></svg>
<div class="abs" style="left:697px;top:106px;width:278px;height:48px;background:#f0f3f8;border-radius:3px"></div>
<svg class="abs" style="left:710px;top:117px" width="20.0" height="18.4" viewBox="0 0 12 11"><path d="M6 11 L1 5.8 A3.1 3.1 0 0 1 1.2 1.2 A3.2 3.2 0 0 1 5.2 1 L4.3 4.6 L6.3 4.6 L5.2 9 L8.2 3.6 L6.2 3.6 L6.8 0.8 A3.2 3.2 0 0 1 10.8 1.2 A3.1 3.1 0 0 1 11 5.8 Z" fill="#c4162a"/></svg>
<div class="t" style="left:745px;top:112px;font-size:14px;font-weight:700;line-height:16px;color:#464c54;letter-spacing:-0.3px">Graph alert</div>
<div class="t" style="left:745px;top:134px;font-size:12px;line-height:14px;color:#7b8087;letter-spacing:-0.2px"><b style="color:#d0192f">ALERTING</b> for 2 minutes</div>
<div class="panel" style="left:994px;top:68px;width:910px;height:486px"><div class="corner"><svg width="30" height="30" viewBox="0 0 30 30"><path d="M0 3 A3 3 0 0 1 3 0 H29 L0 29 Z" fill="#d8dce4"/><g fill="#6e737d"><rect x="8.1" y="6.6" width="2" height="1.8"/><path d="M7.2 10 H10.2 V14 H11 V15 H7 V14 H8.1 V11 H7.2 Z"/></g></svg></div>
</div>
<div class="t" style="left:1395px;width:108px;text-align:center;top:75px;font-size:14px;font-weight:700;line-height:16px;letter-spacing:-0.3px">Time Series</div>
<svg class="abs" style="left:0;top:0" width="1920" height="1080" viewBox="0 0 1920 1080"><path d="M1022 132.5 H1887.5" stroke="rgba(204,209,217,0.8)" stroke-width="1"/><path d="M1022 171.5 H1887.5" stroke="rgba(204,209,217,0.8)" stroke-width="1"/><path d="M1022 209.5 H1887.5" stroke="rgba(204,209,217,0.8)" stroke-width="1"/><path d="M1022 248.5 H1887.5" stroke="rgba(204,209,217,0.8)" stroke-width="1"/><path d="M1022 286.5 H1887.5" stroke="rgba(204,209,217,0.8)" stroke-width="1"/><path d="M1022 325.5 H1887.5" stroke="rgba(204,209,217,0.8)" stroke-width="1"/><path d="M1022 363.5 H1887.5" stroke="rgba(204,209,217,0.8)" stroke-width="1"/><path d="M1022 402.5 H1887.5" stroke="rgba(204,209,217,0.8)" stroke-width="1"/><path d="M1022 440.5 H1887.5" stroke="rgba(204,209,217,0.8)" stroke-width="1"/><path d="M1054.5 113 V450" stroke="rgba(204,209,217,0.8)" stroke-width="1"/><path d="M1115.5 113 V450" stroke="rgba(204,209,217,0.8)" stroke-width="1"/><path d="M1176.5 113 V450" stroke="rgba(204,209,217,0.8)" stroke-width="1"/><path d="M1237.5 113 V450" stroke="rgba(204,209,217,0.8)" stroke-width="1"/><path d="M1298.5 113 V450" stroke="rgba(204,209,217,0.8)" stroke-width="1"/><path d="M1359.5 113 V450" stroke="rgba(204,209,217,0.8)" stroke-width="1"/><path d="M1420.5 113 V450" stroke="rgba(204,209,217,0.8)" stroke-width="1"/><path d="M1481.5 113 V450" stroke="rgba(204,209,217,0.8)" stroke-width="1"/><path d="M1542.5 113 V450" stroke="rgba(204,209,217,0.8)" stroke-width="1"/><path d="M1604.5 113 V450" stroke="rgba(204,209,217,0.8)" stroke-width="1"/><path d="M1665.5 113 V450" stroke="rgba(204,209,217,0.8)" stroke-width="1"/><path d="M1726.5 113 V450" stroke="rgba(204,209,217,0.8)" stroke-width="1"/><path d="M1787.5 113 V450" stroke="rgba(204,209,217,0.8)" stroke-width="1"/><path d="M1848.5 113 V450" stroke="rgba(204,209,217,0.8)" stroke-width="1"/><rect x="1032.64" y="286.7" width="3" height="76.6" fill="#7eb26d"/><rect x="1032.64" y="325.2" width="3" height="38.1" fill="#eab839"/><rect x="1037.73" y="283.6" width="3" height="79.7" fill="#7eb26d"/><rect x="1037.73" y="322.1" width="3" height="41.2" fill="#eab839"/><rect x="1042.82" y="255.9" width="3" height="107.4" fill="#7eb26d"/><rect x="1042.82" y="294.4" width="3" height="68.9" fill="#eab839"/><rect x="1047.91" y="227.2" width="3" height="136.1" fill="#7eb26d"/><rect x="1047.91" y="265.7" width="3" height="97.6" fill="#eab839"/><rect x="1053.00" y="196.0" width="3" height="167.3" fill="#7eb26d"/><rect x="1053.00" y="234.5" width="3" height="128.8" fill="#eab839"/><rect x="1058.09" y="170.8" width="3" height="192.5" fill="#7eb26d"/><rect x="1058.09" y="209.3" width="3" height="154.0" fill="#eab839"/><rect x="1063.18" y="155.4" width="3" height="207.9" fill="#7eb26d"/><rect x="1063.18" y="193.9" width="3" height="169.4" fill="#eab839"/><rect x="1068.27" y="151.6" width="3" height="211.8" fill="#7eb26d"/><rect x="1068.27" y="190.1" width="3" height="173.2" fill="#eab839"/><rect x="1073.36" y="178.5" width="3" height="184.8" fill="#7eb26d"/><rect x="1073.36" y="217.0" width="3" height="146.3" fill="#eab839"/><rect x="1078.45" y="196.8" width="3" height="166.5" fill="#7eb26d"/><rect x="1078.45" y="235.3" width="3" height="128.0" fill="#eab839"/><rect x="1083.54" y="211.8" width="3" height="151.5" fill="#7eb26d"/><rect x="1083.54" y="250.3" width="3" height="113.0" fill="#eab839"/><rect x="1088.63" y="218.0" width="3" height="145.3" fill="#7eb26d"/><rect x="1088.63" y="256.5" width="3" height="106.8" fill="#eab839"/><rect x="1093.72" y="221.0" width="3" height="142.3" fill="#7eb26d"/><rect x="1093.72" y="259.5" width="3" height="103.8" fill="#eab839"/><rect x="1098.81" y="222.2" width="3" height="141.1" fill="#7eb26d"/><rect x="1098.81" y="260.7" width="3" height="102.6" fill="#eab839"/><rect x="1103.90" y="223.0" width="3" height="140.3" fill="#7eb26d"/><rect x="1103.90" y="261.5" width="3" height="101.8" fill="#eab839"/><rect x="1108.99" y="227.2" width="3" height="136.1" fill="#7eb26d"/><rect x="1108.99" y="265.7" width="3" height="97.6" fill="#eab839"/><rect x="1114.08" y="229.1" width="3" height="134.2" fill="#7eb26d"/><rect x="1114.08" y="267.6" width="3" height="95.7" fill="#eab839"/><rect x="1119.17" y="230.3" width="3" height="133.0" fill="#7eb26d"/><rect x="1119.17" y="268.8" width="3" height="94.5" fill="#eab839"/><rect x="1124.26" y="232.2" width="3" height="131.1" fill="#7eb26d"/><rect x="1124.26" y="270.7" width="3" height="92.6" fill="#eab839"/><rect x="1129.35" y="232.2" width="3" height="131.1" fill="#7eb26d"/><rect x="1129.35" y="270.7" width="3" height="92.6" fill="#eab839"/><rect x="1134.44" y="232.2" width="3" height="131.1" fill="#7eb26d"/><rect x="1134.44" y="270.7" width="3" height="92.6" fill="#eab839"/><rect x="1139.53" y="232.2" width="3" height="131.1" fill="#7eb26d"/><rect x="1139.53" y="270.7" width="3" height="92.6" fill="#eab839"/><rect x="1144.62" y="232.2" width="3" height="131.1" fill="#7eb26d"/><rect x="1144.62" y="270.7" width="3" height="92.6" fill="#eab839"/><rect x="1149.71" y="231.4" width="3" height="131.9" fill="#7eb26d"/><rect x="1149.71" y="269.9" width="3" height="93.4" fill="#eab839"/><rect x="1154.80" y="232.2" width="3" height="131.1" fill="#7eb26d"/><rect x="1154.80" y="270.7" width="3" height="92.6" fill="#eab839"/><rect x="1159.89" y="231.4" width="3" height="131.9" fill="#7eb26d"/><rect x="1159.89" y="269.9" width="3" height="93.4" fill="#eab839"/><rect x="1164.98" y="227.2" width="3" height="136.1" fill="#7eb26d"/><rect x="1164.98" y="265.7" width="3" height="97.6" fill="#eab839"/><rect x="1170.07" y="224.1" width="3" height="139.2" fill="#7eb26d"/><rect x="1170.07" y="262.6" width="3" height="100.7" fill="#eab839"/><rect x="1175.16" y="216.0" width="3" height="147.3" fill="#7eb26d"/><rect x="1175.16" y="254.5" width="3" height="108.8" fill="#eab839"/><rect x="1180.25" y="212.2" width="3" height="151.1" fill="#7eb26d"/><rect x="1180.25" y="250.7" width="3" height="112.6" fill="#eab839"/><rect x="1185.34" y="207.2" width="3" height="156.1" fill="#7eb26d"/><rect x="1185.34" y="245.7" width="3" height="117.6" fill="#eab839"/><rect x="1190.43" y="212.2" width="3" height="151.1" fill="#7eb26d"/><rect x="1190.43" y="250.7" width="3" height="112.6" fill="#eab839"/><rect x="1195.52" y="215.3" width="3" height="148.0" fill="#7eb26d"/><rect x="1195.52" y="253.8" width="3" height="109.5" fill="#eab839"/><rect x="1200.61" y="223.4" width="3" height="139.9" fill="#7eb26d"/><rect x="1200.61" y="261.9" width="3" height="101.4" fill="#eab839"/><rect x="1205.70" y="225.3" width="3" height="138.0" fill="#7eb26d"/><rect x="1205.70" y="263.8" width="3" height="99.5" fill="#eab839"/><rect x="1210.79" y="223.4" width="3" height="139.9" fill="#7eb26d"/><rect x="1210.79" y="261.9" width="3" height="101.4" fill="#eab839"/><rect x="1215.88" y="225.3" width="3" height="138.0" fill="#7eb26d"/><rect x="1215.88" y="263.8" width="3" height="99.5" fill="#eab839"/><rect x="1220.97" y="226.4" width="3" height="136.9" fill="#7eb26d"/><rect x="1220.97" y="264.9" width="3" height="98.4" fill="#eab839"/><rect x="1226.06" y="229.3" width="3" height="134.0" fill="#7eb26d"/><rect x="1226.06" y="267.8" width="3" height="95.5" fill="#eab839"/><rect x="1231.15" y="232.2" width="3" height="131.1" fill="#7eb26d"/><rect x="1231.15" y="270.7" width="3" height="92.6" fill="#eab839"/><rect x="1236.24" y="234.1" width="3" height="129.2" fill="#7eb26d"/><rect x="1236.24" y="272.6" width="3" height="90.7" fill="#eab839"/><rect x="1241.33" y="239.9" width="3" height="123.4" fill="#7eb26d"/><rect x="1241.33" y="278.4" width="3" height="84.9" fill="#eab839"/><rect x="1246.42" y="240.3" width="3" height="123.0" fill="#7eb26d"/><rect x="1246.42" y="278.8" width="3" height="84.5" fill="#eab839"/><rect x="1251.51" y="237.2" width="3" height="126.1" fill="#7eb26d"/><rect x="1251.51" y="275.7" width="3" height="87.6" fill="#eab839"/><rect x="1256.60" y="236.4" width="3" height="126.9" fill="#7eb26d"/><rect x="1256.60" y="274.9" width="3" height="88.4" fill="#eab839"/><rect x="1261.69" y="236.4" width="3" height="126.9" fill="#7eb26d"/><rect x="1261.69" y="274.9" width="3" height="88.4" fill="#eab839"/><rect x="1266.78" y="238.4" width="3" height="124.9" fill="#7eb26d"/><rect x="1266.78" y="276.9" width="3" height="86.4" fill="#eab839"/><rect x="1271.87" y="249.1" width="3" height="114.2" fill="#7eb26d"/><rect x="1271.87" y="287.6" width="3" height="75.7" fill="#eab839"/><rect x="1276.96" y="262.2" width="3" height="101.1" fill="#7eb26d"/><rect x="1276.96" y="300.7" width="3" height="62.6" fill="#eab839"/><rect x="1282.05" y="273.2" width="3" height="90.1" fill="#7eb26d"/><rect x="1282.05" y="311.7" width="3" height="51.6" fill="#eab839"/><rect x="1287.14" y="267.2" width="3" height="96.1" fill="#7eb26d"/><rect x="1287.14" y="305.7" width="3" height="57.6" fill="#eab839"/><rect x="1292.23" y="245.3" width="3" height="118.0" fill="#7eb26d"/><rect x="1292.23" y="283.8" width="3" height="79.5" fill="#eab839"/><rect x="1297.32" y="223.9" width="3" height="139.4" fill="#7eb26d"/><rect x="1297.32" y="262.4" width="3" height="100.9" fill="#eab839"/><rect x="1302.41" y="211.0" width="3" height="152.3" fill="#7eb26d"/><rect x="1302.41" y="249.5" width="3" height="113.8" fill="#eab839"/><rect x="1307.50" y="203.3" width="3" height="160.0" fill="#7eb26d"/><rect x="1307.50" y="241.8" width="3" height="121.5" fill="#eab839"/><rect x="1312.59" y="207.2" width="3" height="156.1" fill="#7eb26d"/><rect x="1312.59" y="245.7" width="3" height="117.6" fill="#eab839"/><rect x="1317.68" y="223.0" width="3" height="140.3" fill="#7eb26d"/><rect x="1317.68" y="261.5" width="3" height="101.8" fill="#eab839"/><rect x="1322.77" y="239.1" width="3" height="124.2" fill="#7eb26d"/><rect x="1322.77" y="277.6" width="3" height="85.7" fill="#eab839"/><rect x="1327.86" y="250.3" width="3" height="113.0" fill="#7eb26d"/><rect x="1327.86" y="288.8" width="3" height="74.5" fill="#eab839"/><rect x="1332.95" y="259.2" width="3" height="104.1" fill="#7eb26d"/><rect x="1332.95" y="297.7" width="3" height="65.6" fill="#eab839"/><rect x="1338.04" y="270.3" width="3" height="93.0" fill="#7eb26d"/><rect x="1338.04" y="308.8" width="3" height="54.5" fill="#eab839"/><rect x="1343.13" y="279.2" width="3" height="84.1" fill="#7eb26d"/><rect x="1343.13" y="317.7" width="3" height="45.6" fill="#eab839"/><rect x="1348.22" y="290.2" width="3" height="73.1" fill="#7eb26d"/><rect x="1348.22" y="328.7" width="3" height="34.6" fill="#eab839"/><rect x="1353.31" y="290.2" width="3" height="73.1" fill="#7eb26d"/><rect x="1353.31" y="328.7" width="3" height="34.6" fill="#eab839"/><rect x="1358.40" y="290.2" width="3" height="73.1" fill="#7eb26d"/><rect x="1358.40" y="328.7" width="3" height="34.6" fill="#eab839"/><rect x="1363.49" y="297.5" width="3" height="65.8" fill="#7eb26d"/><rect x="1363.49" y="336.0" width="3" height="27.3" fill="#eab839"/><rect x="1368.58" y="296.1" width="3" height="67.2" fill="#7eb26d"/><rect x="1368.58" y="334.6" width="3" height="28.7" fill="#eab839"/><rect x="1373.67" y="289.2" width="3" height="74.1" fill="#7eb26d"/><rect x="1373.67" y="327.7" width="3" height="35.6" fill="#eab839"/><rect x="1378.76" y="276.1" width="3" height="87.2" fill="#7eb26d"/><rect x="1378.76" y="314.6" width="3" height="48.7" fill="#eab839"/><rect x="1383.85" y="269.2" width="3" height="94.1" fill="#7eb26d"/><rect x="1383.85" y="307.7" width="3" height="55.6" fill="#eab839"/><rect x="1388.94" y="262.2" width="3" height="101.1" fill="#7eb26d"/><rect x="1388.94" y="300.7" width="3" height="62.6" fill="#eab839"/><rect x="1394.03" y="252.2" width="3" height="111.1" fill="#7eb26d"/><rect x="1394.03" y="290.7" width="3" height="72.6" fill="#eab839"/><rect x="1399.12" y="245.3" width="3" height="118.0" fill="#7eb26d"/><rect x="1399.12" y="283.8" width="3" height="79.5" fill="#eab839"/><rect x="1404.21" y="233.0" width="3" height="130.3" fill="#7eb26d"/><rect x="1404.21" y="271.5" width="3" height="91.8" fill="#eab839"/><rect x="1409.30" y="216.0" width="3" height="147.3" fill="#7eb26d"/><rect x="1409.30" y="254.5" width="3" height="108.8" fill="#eab839"/><rect x="1414.39" y="199.1" width="3" height="164.2" fill="#7eb26d"/><rect x="1414.39" y="237.6" width="3" height="125.7" fill="#eab839"/><rect x="1419.48" y="181.0" width="3" height="182.3" fill="#7eb26d"/><rect x="1419.48" y="219.5" width="3" height="143.8" fill="#eab839"/><rect x="1424.57" y="178.1" width="3" height="185.2" fill="#7eb26d"/><rect x="1424.57" y="216.6" width="3" height="146.7" fill="#eab839"/><rect x="1429.66" y="188.3" width="3" height="175.0" fill="#7eb26d"/><rect x="1429.66" y="226.8" width="3" height="136.5" fill="#eab839"/><rect x="1434.75" y="189.1" width="3" height="174.2" fill="#7eb26d"/><rect x="1434.75" y="227.6" width="3" height="135.7" fill="#eab839"/><rect x="1439.84" y="207.2" width="3" height="156.1" fill="#7eb26d"/><rect x="1439.84" y="245.7" width="3" height="117.6" fill="#eab839"/><rect x="1444.93" y="227.2" width="3" height="136.1" fill="#7eb26d"/><rect x="1444.93" y="265.7" width="3" height="97.6" fill="#eab839"/><rect x="1450.02" y="232.2" width="3" height="131.1" fill="#7eb26d"/><rect x="1450.02" y="270.7" width="3" height="92.6" fill="#eab839"/><rect x="1455.11" y="249.1" width="3" height="114.2" fill="#7eb26d"/><rect x="1455.11" y="287.6" width="3" height="75.7" fill="#eab839"/><rect x="1460.20" y="259.2" width="3" height="104.1" fill="#7eb26d"/><rect x="1460.20" y="297.7" width="3" height="65.6" fill="#eab839"/><rect x="1465.29" y="279.2" width="3" height="84.1" fill="#7eb26d"/><rect x="1465.29" y="317.7" width="3" height="45.6" fill="#eab839"/><rect x="1470.38" y="284.2" width="3" height="79.1" fill="#7eb26d"/><rect x="1470.38" y="322.7" width="3" height="40.6" fill="#eab839"/><rect x="1475.47" y="286.1" width="3" height="77.2" fill="#7eb26d"/><rect x="1475.47" y="324.6" width="3" height="38.7" fill="#eab839"/><rect x="1480.56" y="287.3" width="3" height="76.0" fill="#7eb26d"/><rect x="1480.56" y="325.8" width="3" height="37.5" fill="#eab839"/><rect x="1485.65" y="289.2" width="3" height="74.1" fill="#7eb26d"/><rect x="1485.65" y="327.7" width="3" height="35.6" fill="#eab839"/><rect x="1490.74" y="281.1" width="3" height="82.2" fill="#7eb26d"/><rect x="1490.74" y="319.6" width="3" height="43.7" fill="#eab839"/><rect x="1495.83" y="288.0" width="3" height="75.3" fill="#7eb26d"/><rect x="1495.83" y="326.5" width="3" height="36.8" fill="#eab839"/><rect x="1500.92" y="279.9" width="3" height="83.4" fill="#7eb26d"/><rect x="1500.92" y="318.4" width="3" height="44.9" fill="#eab839"/><rect x="1506.01" y="287.3" width="3" height="76.0" fill="#7eb26d"/><rect x="1506.01" y="325.8" width="3" height="37.5" fill="#eab839"/><rect x="1511.10" y="290.2" width="3" height="73.1" fill="#7eb26d"/><rect x="1511.10" y="328.7" width="3" height="34.6" fill="#eab839"/><rect x="1516.19" y="295.2" width="3" height="68.1" fill="#7eb26d"/><rect x="1516.19" y="333.7" width="3" height="29.6" fill="#eab839"/><rect x="1521.28" y="292.3" width="3" height="71.0" fill="#7eb26d"/><rect x="1521.28" y="330.8" width="3" height="32.5" fill="#eab839"/><rect x="1526.37" y="285.0" width="3" height="78.3" fill="#7eb26d"/><rect x="1526.37" y="323.5" width="3" height="39.8" fill="#eab839"/><rect x="1531.46" y="283.0" width="3" height="80.3" fill="#7eb26d"/><rect x="1531.46" y="321.5" width="3" height="41.8" fill="#eab839"/><rect x="1536.55" y="278.0" width="3" height="85.3" fill="#7eb26d"/><rect x="1536.55" y="316.5" width="3" height="46.8" fill="#eab839"/><rect x="1541.64" y="258.0" width="3" height="105.3" fill="#7eb26d"/><rect x="1541.64" y="296.5" width="3" height="66.8" fill="#eab839"/><rect x="1546.73" y="257.2" width="3" height="106.1" fill="#7eb26d"/><rect x="1546.73" y="295.7" width="3" height="67.6" fill="#eab839"/><rect x="1551.82" y="266.1" width="3" height="97.2" fill="#7eb26d"/><rect x="1551.82" y="304.6" width="3" height="58.7" fill="#eab839"/><rect x="1556.91" y="267.2" width="3" height="96.1" fill="#7eb26d"/><rect x="1556.91" y="305.7" width="3" height="57.6" fill="#eab839"/><rect x="1562.00" y="263.0" width="3" height="100.3" fill="#7eb26d"/><rect x="1562.00" y="301.5" width="3" height="61.8" fill="#eab839"/><rect x="1567.09" y="268.0" width="3" height="95.3" fill="#7eb26d"/><rect x="1567.09" y="306.5" width="3" height="56.8" fill="#eab839"/><rect x="1572.18" y="277.3" width="3" height="86.0" fill="#7eb26d"/><rect x="1572.18" y="315.8" width="3" height="47.5" fill="#eab839"/><rect x="1577.27" y="289.2" width="3" height="74.1" fill="#7eb26d"/><rect x="1577.27" y="327.7" width="3" height="35.6" fill="#eab839"/><rect x="1582.36" y="289.2" width="3" height="74.1" fill="#7eb26d"/><rect x="1582.36" y="327.7" width="3" height="35.6" fill="#eab839"/><rect x="1587.45" y="302.3" width="3" height="61.0" fill="#7eb26d"/><rect x="1587.45" y="340.8" width="3" height="22.5" fill="#eab839"/><rect x="1592.54" y="302.3" width="3" height="61.0" fill="#7eb26d"/><rect x="1592.54" y="340.8" width="3" height="22.5" fill="#eab839"/><rect x="1597.63" y="290.2" width="3" height="73.1" fill="#7eb26d"/><rect x="1597.63" y="328.7" width="3" height="34.6" fill="#eab839"/><rect x="1602.72" y="296.1" width="3" height="67.2" fill="#7eb26d"/><rect x="1602.72" y="334.6" width="3" height="28.7" fill="#eab839"/><rect x="1607.81" y="308.1" width="3" height="55.2" fill="#7eb26d"/><rect x="1607.81" y="346.6" width="3" height="16.7" fill="#eab839"/><rect x="1612.90" y="321.9" width="3" height="41.4" fill="#7eb26d"/><rect x="1612.90" y="360.4" width="3" height="2.9" fill="#eab839"/><rect x="1617.99" y="308.1" width="3" height="55.2" fill="#7eb26d"/><rect x="1617.99" y="346.6" width="3" height="16.7" fill="#eab839"/><rect x="1623.08" y="323.1" width="3" height="40.2" fill="#7eb26d"/><rect x="1623.08" y="361.6" width="3" height="1.7" fill="#eab839"/><rect x="1628.17" y="336.2" width="3" height="27.1" fill="#7eb26d"/><rect x="1628.17" y="363.3" width="3" height="11.4" fill="#eab839"/><rect x="1633.26" y="340.0" width="3" height="23.3" fill="#7eb26d"/><rect x="1633.26" y="363.3" width="3" height="15.2" fill="#eab839"/><rect x="1638.35" y="346.2" width="3" height="17.1" fill="#7eb26d"/><rect x="1638.35" y="363.3" width="3" height="21.4" fill="#eab839"/><rect x="1643.44" y="346.9" width="3" height="16.4" fill="#7eb26d"/><rect x="1643.44" y="363.3" width="3" height="22.1" fill="#eab839"/><rect x="1648.53" y="355.0" width="3" height="8.3" fill="#7eb26d"/><rect x="1648.53" y="363.3" width="3" height="30.2" fill="#eab839"/><rect x="1653.62" y="346.2" width="3" height="17.1" fill="#7eb26d"/><rect x="1653.62" y="363.3" width="3" height="21.4" fill="#eab839"/><rect x="1658.71" y="330.0" width="3" height="33.3" fill="#7eb26d"/><rect x="1658.71" y="363.3" width="3" height="5.2" fill="#eab839"/><rect x="1663.80" y="313.1" width="3" height="50.2" fill="#7eb26d"/><rect x="1663.80" y="351.6" width="3" height="11.7" fill="#eab839"/><rect x="1679.07" y="276.1" width="3" height="87.2" fill="#7eb26d"/><rect x="1679.07" y="314.6" width="3" height="48.7" fill="#eab839"/><rect x="1684.16" y="286.1" width="3" height="77.2" fill="#7eb26d"/><rect x="1684.16" y="324.6" width="3" height="38.7" fill="#eab839"/><rect x="1689.25" y="291.1" width="3" height="72.2" fill="#7eb26d"/><rect x="1689.25" y="329.6" width="3" height="33.7" fill="#eab839"/><rect x="1694.34" y="298.0" width="3" height="65.3" fill="#7eb26d"/><rect x="1694.34" y="336.5" width="3" height="26.8" fill="#eab839"/><rect x="1699.43" y="301.9" width="3" height="61.4" fill="#7eb26d"/><rect x="1699.43" y="340.4" width="3" height="22.9" fill="#eab839"/><rect x="1704.52" y="304.2" width="3" height="59.1" fill="#7eb26d"/><rect x="1704.52" y="342.7" width="3" height="20.6" fill="#eab839"/><rect x="1709.61" y="321.1" width="3" height="42.2" fill="#7eb26d"/><rect x="1709.61" y="359.6" width="3" height="3.7" fill="#eab839"/><rect x="1714.70" y="340.0" width="3" height="23.3" fill="#7eb26d"/><rect x="1714.70" y="363.3" width="3" height="15.2" fill="#eab839"/><rect x="1719.79" y="346.9" width="3" height="16.4" fill="#7eb26d"/><rect x="1719.79" y="363.3" width="3" height="22.1" fill="#eab839"/><rect x="1724.88" y="348.1" width="3" height="15.2" fill="#7eb26d"/><rect x="1724.88" y="363.3" width="3" height="23.3" fill="#eab839"/><rect x="1729.97" y="353.1" width="3" height="10.2" fill="#7eb26d"/><rect x="1729.97" y="363.3" width="3" height="28.3" fill="#eab839"/><rect x="1735.06" y="361.0" width="3" height="2.3" fill="#7eb26d"/><rect x="1735.06" y="363.3" width="3" height="36.2" fill="#eab839"/><rect x="1740.15" y="358.1" width="3" height="5.2" fill="#7eb26d"/><rect x="1740.15" y="363.3" width="3" height="33.3" fill="#eab839"/><rect x="1745.24" y="359.1" width="3" height="4.2" fill="#7eb26d"/><rect x="1745.24" y="363.3" width="3" height="34.3" fill="#eab839"/><rect x="1750.33" y="356.9" width="3" height="6.4" fill="#7eb26d"/><rect x="1750.33" y="363.3" width="3" height="32.1" fill="#eab839"/><rect x="1755.42" y="354.1" width="3" height="9.2" fill="#7eb26d"/><rect x="1755.42" y="363.3" width="3" height="29.3" fill="#eab839"/><rect x="1760.51" y="354.1" width="3" height="9.2" fill="#7eb26d"/><rect x="1760.51" y="363.3" width="3" height="29.3" fill="#eab839"/><rect x="1765.60" y="362.1" width="3" height="1.2" fill="#7eb26d"/><rect x="1765.60" y="363.3" width="3" height="37.3" fill="#eab839"/><rect x="1770.69" y="363.3" width="3" height="38.5" fill="#eab839"/><rect x="1775.78" y="333.8" width="3" height="29.5" fill="#7eb26d"/><rect x="1775.78" y="363.3" width="3" height="9.0" fill="#eab839"/><rect x="1780.87" y="316.9" width="3" height="46.4" fill="#7eb26d"/><rect x="1780.87" y="355.4" width="3" height="7.9" fill="#eab839"/><rect x="1785.96" y="296.9" width="3" height="66.4" fill="#7eb26d"/><rect x="1785.96" y="335.4" width="3" height="27.9" fill="#eab839"/><rect x="1791.05" y="291.1" width="3" height="72.2" fill="#7eb26d"/><rect x="1791.05" y="329.6" width="3" height="33.7" fill="#eab839"/><rect x="1796.14" y="283.0" width="3" height="80.3" fill="#7eb26d"/><rect x="1796.14" y="321.5" width="3" height="41.8" fill="#eab839"/><rect x="1801.23" y="285.0" width="3" height="78.3" fill="#7eb26d"/><rect x="1801.23" y="323.5" width="3" height="39.8" fill="#eab839"/><rect x="1806.32" y="298.0" width="3" height="65.3" fill="#7eb26d"/><rect x="1806.32" y="336.5" width="3" height="26.8" fill="#eab839"/><rect x="1811.41" y="308.1" width="3" height="55.2" fill="#7eb26d"/><rect x="1811.41" y="346.6" width="3" height="16.7" fill="#eab839"/><rect x="1816.50" y="310.0" width="3" height="53.3" fill="#7eb26d"/><rect x="1816.50" y="348.5" width="3" height="14.8" fill="#eab839"/><rect x="1821.59" y="293.0" width="3" height="70.3" fill="#7eb26d"/><rect x="1821.59" y="331.5" width="3" height="31.8" fill="#eab839"/><rect x="1826.68" y="289.2" width="3" height="74.1" fill="#7eb26d"/><rect x="1826.68" y="327.7" width="3" height="35.6" fill="#eab839"/><rect x="1831.77" y="274.9" width="3" height="88.4" fill="#7eb26d"/><rect x="1831.77" y="313.4" width="3" height="49.9" fill="#eab839"/><rect x="1836.86" y="264.2" width="3" height="99.1" fill="#7eb26d"/><rect x="1836.86" y="302.7" width="3" height="60.6" fill="#eab839"/><rect x="1841.95" y="256.1" width="3" height="107.2" fill="#7eb26d"/><rect x="1841.95" y="294.6" width="3" height="68.7" fill="#eab839"/><rect x="1847.04" y="251.1" width="3" height="112.2" fill="#7eb26d"/><rect x="1847.04" y="289.6" width="3" height="73.7" fill="#eab839"/><rect x="1852.13" y="247.2" width="3" height="116.1" fill="#7eb26d"/><rect x="1852.13" y="285.7" width="3" height="77.6" fill="#eab839"/><rect x="1857.22" y="237.2" width="3" height="126.1" fill="#7eb26d"/><rect x="1857.22" y="275.7" width="3" height="87.6" fill="#eab839"/><rect x="1862.31" y="220.3" width="3" height="143.0" fill="#7eb26d"/><rect x="1862.31" y="258.8" width="3" height="104.5" fill="#eab839"/><rect x="1867.40" y="206.0" width="3" height="157.3" fill="#7eb26d"/><rect x="1867.40" y="244.5" width="3" height="118.8" fill="#eab839"/><rect x="1872.49" y="195.2" width="3" height="168.1" fill="#7eb26d"/><rect x="1872.49" y="233.7" width="3" height="129.6" fill="#eab839"/><rect x="1877.58" y="187.2" width="3" height="176.1" fill="#7eb26d"/><rect x="1877.58" y="225.7" width="3" height="137.6" fill="#eab839"/><rect x="1882.67" y="179.1" width="3" height="184.2" fill="#7eb26d"/><rect x="1882.67" y="217.6" width="3" height="145.7" fill="#eab839"/></svg>
<div class="t" style="right:903px;top:125px;font-size:12px;line-height:14px;color:#464c54">12</div>
<div class="t" style="right:903px;top:164px;font-size:12px;line-height:14px;color:#464c54">10</div>
<div class="t" style="right:903px;top:202px;font-size:12px;line-height:14px;color:#464c54">8</div>
<div class="t" style="right:903px;top:241px;font-size:12px;line-height:14px;color:#464c54">6</div>
<div class="t" style="right:903px;top:279px;font-size:12px;line-height:14px;color:#464c54">4</div>
<div class="t" style="right:903px;top:318px;font-size:12px;line-height:14px;color:#464c54">2</div>
<div class="t" style="right:903px;top:356px;font-size:12px;line-height:14px;color:#464c54">0</div>
<div class="t" style="right:903px;top:395px;font-size:12px;line-height:14px;color:#464c54">-2</div>
<div class="t" style="right:903px;top:433px;font-size:12px;line-height:14px;color:#464c54">-4</div>
<div class="t" style="left:1022.0px;top:453px;font-size:12px;line-height:14px;color:#464c54;letter-spacing:0.35px">11/23 12:00</div>
<div class="t" style="left:1083.1px;top:453px;font-size:12px;line-height:14px;color:#464c54;letter-spacing:0.35px">11/24 00:00</div>
<div class="t" style="left:1144.2px;top:453px;font-size:12px;line-height:14px;color:#464c54;letter-spacing:0.35px">11/24 12:00</div>
<div class="t" style="left:1205.2px;top:453px;font-size:12px;line-height:14px;color:#464c54;letter-spacing:0.35px">11/25 00:00</div>
<div class="t" style="left:1266.3px;top:453px;font-size:12px;line-height:14px;color:#464c54;letter-spacing:0.35px">11/25 12:00</div>
<div class="t" style="left:1327.4px;top:453px;font-size:12px;line-height:14px;color:#464c54;letter-spacing:0.35px">11/26 00:00</div>
<div class="t" style="left:1388.5px;top:453px;font-size:12px;line-height:14px;color:#464c54;letter-spacing:0.35px">11/26 12:00</div>
<div class="t" style="left:1449.6px;top:453px;font-size:12px;line-height:14px;color:#464c54;letter-spacing:0.35px">11/27 00:00</div>
<div class="t" style="left:1510.6px;top:453px;font-size:12px;line-height:14px;color:#464c54;letter-spacing:0.35px">11/27 12:00</div>
<div class="t" style="left:1571.7px;top:453px;font-size:12px;line-height:14px;color:#464c54;letter-spacing:0.35px">11/28 00:00</div>
<div class="t" style="left:1632.8px;top:453px;font-size:12px;line-height:14px;color:#464c54;letter-spacing:0.35px">11/28 12:00</div>
<div class="t" style="left:1693.9px;top:453px;font-size:12px;line-height:14px;color:#464c54;letter-spacing:0.35px">11/29 00:00</div>
<div class="t" style="left:1755.0px;top:453px;font-size:12px;line-height:14px;color:#464c54;letter-spacing:0.35px">11/29 12:00</div>
<div class="t" style="left:1816.0px;top:453px;font-size:12px;line-height:14px;color:#464c54;letter-spacing:0.35px">11/30 00:00</div>
<div class="t" style="right:291px;top:478px;font-size:13px;font-weight:700;line-height:15px;color:#33a2e5">Min</div>
<div class="t" style="right:170px;top:478px;font-size:13px;font-weight:700;line-height:15px;color:#33a2e5">Max</div>
<div class="t" style="right:25px;top:478px;font-size:13px;font-weight:700;line-height:15px;color:#33a2e5">Mean</div>
<div class="abs" style="left:1011px;top:498px;width:884px;height:1px;background:#dce1e6"></div>
<div class="abs" style="left:1011px;top:521px;width:884px;height:1px;background:#dce1e6"></div>
<div class="abs" style="left:1011px;top:544px;width:884px;height:1px;background:#dce1e6"></div>
<div class="abs" style="left:1019px;top:508px;width:14px;height:4px;background:#7eb26d"></div>
<div class="t" style="left:1041px;top:504px;font-size:12px;line-height:14px;color:#464c54">auto~temp_maxc.mean</div>
<div class="t" style="right:291px;top:504px;font-size:12px;line-height:14px;color:#464c54">-0.0042</div>
<div class="t" style="right:170px;top:504px;font-size:12px;line-height:14px;color:#464c54">11.0</div>
<div class="t" style="right:25px;top:504px;font-size:12px;line-height:14px;color:#464c54">5.15</div>
<div class="abs" style="left:1019px;top:532px;width:14px;height:4px;background:#eab839"></div>
<div class="t" style="left:1041px;top:527px;font-size:12px;line-height:14px;color:#464c54">auto~temp_maxc.mean</div>
<div class="t" style="right:291px;top:527px;font-size:12px;line-height:14px;color:#464c54">-2.0</div>
<div class="t" style="right:170px;top:527px;font-size:12px;line-height:14px;color:#464c54">8.99</div>
<div class="t" style="right:25px;top:527px;font-size:12px;line-height:14px;color:#464c54">3.15</div>
<div class="panel" style="left:76px;top:562px;width:375px;height:486px"><div class="corner"><svg width="30" height="30" viewBox="0 0 30 30"><path d="M0 3 A3 3 0 0 1 3 0 H29 L0 29 Z" fill="#d8dce4"/><g fill="#6e737d"><rect x="8.1" y="6.6" width="2" height="1.8"/><path d="M7.2 10 H10.2 V14 H11 V15 H7 V14 H8.1 V11 H7.2 Z"/></g></svg></div>
</div>
<div class="t" style="left:77px;width:374px;text-align:center;top:569px;font-size:14px;font-weight:700;line-height:16px;letter-spacing:-0.3px">Stat</div>
<svg class="abs" style="left:0;top:0" width="1920" height="1080" viewBox="0 0 1920 1080"><polygon points="78.0,1015.3 78.0,952.0 80.2,949.5 82.4,926.6 84.7,902.9 86.9,877.1 89.1,856.3 91.3,843.6 93.6,840.4 95.8,862.7 98.0,877.8 100.2,890.2 102.4,895.3 104.7,897.8 106.9,898.8 109.1,899.4 111.3,902.9 113.5,904.5 115.8,905.4 118.0,907.0 120.2,907.0 122.4,907.0 124.7,907.0 126.9,907.0 129.1,906.4 131.3,907.0 133.5,906.4 135.8,902.9 138.0,900.3 140.2,893.7 142.4,890.5 144.6,886.4 146.9,890.5 149.1,893.0 151.3,899.7 153.5,901.3 155.8,899.7 158.0,901.3 160.2,902.3 162.4,904.6 164.6,907.0 166.9,908.6 169.1,913.4 171.3,913.7 173.5,911.2 175.7,910.5 178.0,910.5 180.2,912.1 182.4,921.0 184.6,931.8 186.9,940.9 189.1,936.0 191.3,917.8 193.5,900.2 195.7,889.5 198.0,883.2 200.2,886.4 202.4,899.4 204.6,912.7 206.9,922.0 209.1,929.3 211.3,938.5 213.5,945.8 215.7,954.9 218.0,954.9 220.2,954.9 222.4,960.9 224.6,959.8 226.8,954.1 229.1,943.3 231.3,937.5 233.5,931.8 235.7,923.6 238.0,917.8 240.2,907.7 242.4,893.7 244.6,879.7 246.8,864.7 249.1,862.3 251.3,870.8 253.5,871.4 255.7,886.4 257.9,902.9 260.2,907.0 262.4,921.0 264.6,929.3 266.8,945.8 269.1,950.0 271.3,951.5 273.5,952.5 275.7,954.1 277.9,947.4 280.2,953.1 282.4,946.5 284.6,952.5 286.8,954.9 289.0,959.0 291.3,956.6 293.5,950.6 295.7,949.0 297.9,944.9 300.2,928.3 302.4,927.7 304.6,935.0 306.8,936.0 309.0,932.5 311.3,936.6 313.5,944.2 315.7,954.1 317.9,954.1 320.1,964.9 322.4,964.9 324.6,954.9 326.8,959.8 329.0,969.7 331.3,981.1 333.5,969.7 335.7,982.1 337.9,992.9 340.1,996.1 342.4,1001.1 344.6,1001.8 346.8,1008.5 349.0,1001.1 351.3,987.8 353.5,973.8 353.5,1015.3" fill="rgba(86,166,75,0.18)"/><polyline points="78.0,952.0 80.2,949.5 82.4,926.6 84.7,902.9 86.9,877.1 89.1,856.3 91.3,843.6 93.6,840.4 95.8,862.7 98.0,877.8 100.2,890.2 102.4,895.3 104.7,897.8 106.9,898.8 109.1,899.4 111.3,902.9 113.5,904.5 115.8,905.4 118.0,907.0 120.2,907.0 122.4,907.0 124.7,907.0 126.9,907.0 129.1,906.4 131.3,907.0 133.5,906.4 135.8,902.9 138.0,900.3 140.2,893.7 142.4,890.5 144.6,886.4 146.9,890.5 149.1,893.0 151.3,899.7 153.5,901.3 155.8,899.7 158.0,901.3 160.2,902.3 162.4,904.6 164.6,907.0 166.9,908.6 169.1,913.4 171.3,913.7 173.5,911.2 175.7,910.5 178.0,910.5 180.2,912.1 182.4,921.0 184.6,931.8 186.9,940.9 189.1,936.0 191.3,917.8 193.5,900.2 195.7,889.5 198.0,883.2 200.2,886.4 202.4,899.4 204.6,912.7 206.9,922.0 209.1,929.3 211.3,938.5 213.5,945.8 215.7,954.9 218.0,954.9 220.2,954.9 222.4,960.9 224.6,959.8 226.8,954.1 229.1,943.3 231.3,937.5 233.5,931.8 235.7,923.6 238.0,917.8 240.2,907.7 242.4,893.7 244.6,879.7 246.8,864.7 249.1,862.3 251.3,870.8 253.5,871.4 255.7,886.4 257.9,902.9 260.2,907.0 262.4,921.0 264.6,929.3 266.8,945.8 269.1,950.0 271.3,951.5 273.5,952.5 275.7,954.1 277.9,947.4 280.2,953.1 282.4,946.5 284.6,952.5 286.8,954.9 289.0,959.0 291.3,956.6 293.5,950.6 295.7,949.0 297.9,944.9 300.2,928.3 302.4,927.7 304.6,935.0 306.8,936.0 309.0,932.5 311.3,936.6 313.5,944.2 315.7,954.1 317.9,954.1 320.1,964.9 322.4,964.9 324.6,954.9 326.8,959.8 329.0,969.7 331.3,981.1 333.5,969.7 335.7,982.1 337.9,992.9 340.1,996.1 342.4,1001.1 344.6,1001.8 346.8,1008.5 349.0,1001.1 351.3,987.8 353.5,973.8" fill="none" stroke="#56a64b" stroke-width="1"/><polygon points="360.1,1015.3 360.1,943.3 362.4,951.5 364.6,955.7 366.8,961.4 369.0,964.6 371.2,966.5 373.5,980.5 375.7,996.1 377.9,1001.8 380.1,1002.7 382.4,1006.9 384.6,1013.4 386.8,1011.0 389.0,1011.8 391.2,1010.1 393.5,1007.7 395.7,1007.7 397.9,1014.3 400.1,1015.3 402.3,991.0 404.6,977.0 406.8,960.4 409.0,955.7 411.2,949.0 413.5,950.6 415.7,961.4 417.9,969.7 420.1,971.3 422.3,957.3 424.6,954.1 426.8,942.3 429.0,933.4 431.2,926.7 433.4,922.6 435.7,919.4 437.9,911.2 440.1,897.2 442.3,885.4 444.6,876.5 446.8,869.8 449.0,863.1 449.0,1015.3" fill="rgba(86,166,75,0.18)"/><polyline points="360.1,943.3 362.4,951.5 364.6,955.7 366.8,961.4 369.0,964.6 371.2,966.5 373.5,980.5 375.7,996.1 377.9,1001.8 380.1,1002.7 382.4,1006.9 384.6,1013.4 386.8,1011.0 389.0,1011.8 391.2,1010.1 393.5,1007.7 395.7,1007.7 397.9,1014.3 400.1,1015.3 402.3,991.0 404.6,977.0 406.8,960.4 409.0,955.7 411.2,949.0 413.5,950.6 415.7,961.4 417.9,969.7 420.1,971.3 422.3,957.3 424.6,954.1 426.8,942.3 429.0,933.4 431.2,926.7 433.4,922.6 435.7,919.4 437.9,911.2 440.1,897.2 442.3,885.4 444.6,876.5 446.8,869.8 449.0,863.1" fill="none" stroke="#56a64b" stroke-width="1"/></svg>
<div class="t" style="left:77px;width:374px;text-align:center;top:721px;font-size:165px;line-height:190px;color:#56a64b;font-weight:400;-webkit-text-stroke:5px #56a64b;letter-spacing:3px;text-indent:3px">9.57</div>
<div class="panel" style="left:459px;top:562px;width:375px;height:486px"><div class="corner"><svg width="30" height="30" viewBox="0 0 30 30"><path d="M0 3 A3 3 0 0 1 3 0 H29 L0 29 Z" fill="#d8dce4"/><g fill="#6e737d"><rect x="8.1" y="6.6" width="2" height="1.8"/><path d="M7.2 10 H10.2 V14 H11 V15 H7 V14 H8.1 V11 H7.2 Z"/></g></svg></div>
</div>
<div class="t" style="left:460px;width:374px;text-align:center;top:569px;font-size:14px;font-weight:700;line-height:16px;letter-spacing:-0.3px">Gauge</div>
<svg class="abs" style="left:0;top:0" width="1920" height="1080" viewBox="0 0 1920 1080"><path d="M480.92 933.17 A174 174 0 1 1 820.33 874.43 L813.83 874.62 A167.5 167.5 0 1 0 487.10 931.16 Z" fill="#56a64b"/><path d="M820.33 874.43 A174 174 0 0 1 811.88 933.17 L805.70 931.16 A167.5 167.5 0 0 0 813.83 874.62 Z" fill="#e02f44"/><path d="M488.52 930.70 A166 166 0 1 1 810.12 852.01 L770.18 858.69 A125.5 125.5 0 1 0 527.04 918.18 Z" fill="#56a64b"/><path d="M810.12 852.01 A166 166 0 0 1 804.28 930.70 L765.76 918.18 A125.5 125.5 0 0 0 770.18 858.69 Z" fill="#eef1f6"/></svg>
<div class="t" style="left:460px;width:374px;text-align:center;top:857px;font-size:69px;font-weight:400;line-height:76px;color:#56a64b;-webkit-text-stroke:2px #56a64b;letter-spacing:0.5px;text-indent:0.5px">9.57</div>
<div class="panel" style="left:841px;top:562px;width:375px;height:486px"><div class="corner"><svg width="30" height="30" viewBox="0 0 30 30"><path d="M0 3 A3 3 0 0 1 3 0 H29 L0 29 Z" fill="#d8dce4"/><g fill="#6e737d"><rect x="8.1" y="6.6" width="2" height="1.8"/><path d="M7.2 10 H10.2 V14 H11 V15 H7 V14 H8.1 V11 H7.2 Z"/></g></svg></div>
</div>
<div class="t" style="left:841px;width:375px;text-align:center;top:569px;font-size:14px;font-weight:700;line-height:16px;letter-spacing:-0.3px">Bar Gauge</div>
<div class="t" style="left:850px;top:604px;font-size:24px;line-height:28px;color:#464c54;letter-spacing:0.3px">Metric 01</div>
<div class="abs" style="left:850px;top:635.3px;width:162.8px;height:43.3px;background:#56a64b;border-radius:3px"></div>
<div class="t" style="left:1027px;top:642px;font-size:25px;line-height:30px;color:#56a64b">9.57</div>
<div class="t" style="left:850px;top:694px;font-size:24px;line-height:28px;color:#464c54;letter-spacing:0.3px">Metric 02</div>
<div class="abs" style="left:850px;top:725.3px;width:115.2px;height:43.3px;background:#56a64b;border-radius:3px"></div>
<div class="t" style="left:980px;top:732px;font-size:25px;line-height:30px;color:#56a64b">4.79</div>
<div class="t" style="left:850px;top:784px;font-size:24px;line-height:28px;color:#464c54;letter-spacing:0.3px">Metric 03</div>
<div class="abs" style="left:850px;top:815.3px;width:183.0px;height:43.3px;background:linear-gradient(to right,#56a64b 45%,#8f7346 65%,#e02f44 100%);border-radius:3px"></div>
<div class="t" style="left:1048px;top:822px;font-size:25px;line-height:30px;color:#e02f44">11.6</div>
<div class="t" style="left:850px;top:874px;font-size:24px;line-height:28px;color:#464c54;letter-spacing:0.3px">Metric 04</div>
<div class="abs" style="left:850px;top:905.3px;width:93.0px;height:43.3px;background:#56a64b;border-radius:3px"></div>
<div class="t" style="left:958px;top:912px;font-size:25px;line-height:30px;color:#56a64b">2.57</div>
<div class="t" style="left:850px;top:964px;font-size:24px;line-height:28px;color:#464c54;letter-spacing:0.3px">Metric 05</div>
<div class="abs" style="left:850px;top:995.3px;width:257.8px;height:43.3px;background:linear-gradient(to right,#56a64b 32%,#8f7146 61%,#e02f44 100%);border-radius:3px"></div>
<div class="t" style="left:1122px;top:1002px;font-size:25px;line-height:30px;color:#e02f44">19.1</div>
<div class="panel" style="left:1224px;top:562px;width:681px;height:486px"><div class="corner"><svg width="30" height="30" viewBox="0 0 30 30"><path d="M0 3 A3 3 0 0 1 3 0 H29 L0 29 Z" fill="#d8dce4"/><g fill="#6e737d"><rect x="8.1" y="6.6" width="2" height="1.8"/><path d="M7.2 10 H10.2 V14 H11 V15 H7 V14 H8.1 V11 H7.2 Z"/></g></svg></div>
</div>
<div class="t" style="left:1224px;width:681px;text-align:center;top:569px;font-size:14px;font-weight:700;line-height:16px;letter-spacing:-0.3px">Table</div>
<div class="abs" style="left:1225px;top:591px;width:679px;height:33px;background:#f1f4f9"></div>
<div class="abs" style="left:1564px;top:591px;width:1px;height:444px;background:#e4e7ec"></div>
<div class="t" style="left:1231px;top:599px;font-size:14px;line-height:18px;color:#33a2e5">Time</div>
<svg class="abs" style="left:1267px;top:601px" width="14" height="14" viewBox="0 0 14 14"><path d="M1 1.5 H13 L8.3 7 V12.5 L5.7 11 V7 Z" fill="none" stroke="#8e939b" stroke-width="1.2" stroke-linejoin="round"/></svg>
<div class="t" style="left:1571px;top:599px;font-size:14px;line-height:18px;color:#33a2e5">Temperature in C°</div>
<svg class="abs" style="left:1688px;top:601px" width="14" height="14" viewBox="0 0 14 14"><path d="M1 1.5 H13 L8.3 7 V12.5 L5.7 11 V7 Z" fill="none" stroke="#8e939b" stroke-width="1.2" stroke-linejoin="round"/></svg>
<div class="t" style="left:1231px;top:633px;font-size:14px;line-height:18px;color:#464c54">2021-11-23 07:00:00</div>
<div class="t" style="left:1571px;top:633px;font-size:14px;line-height:18px;color:#464c54">4 °C</div>
<div class="abs" style="left:1225px;top:658px;width:671px;height:1px;background:#e4e7ec"></div>
<div class="t" style="left:1231px;top:668px;font-size:14px;line-height:18px;color:#464c54">2021-11-23 08:00:00</div>
<div class="t" style="left:1571px;top:668px;font-size:14px;line-height:18px;color:#464c54">3.98 °C</div>
<div class="abs" style="left:1225px;top:693px;width:671px;height:1px;background:#e4e7ec"></div>
<div class="t" style="left:1231px;top:703px;font-size:14px;line-height:18px;color:#464c54">2021-11-23 09:00:00</div>
<div class="t" style="left:1571px;top:703px;font-size:14px;line-height:18px;color:#464c54">4.14 °C</div>
<div class="abs" style="left:1225px;top:728px;width:671px;height:1px;background:#e4e7ec"></div>
<div class="t" style="left:1231px;top:738px;font-size:14px;line-height:18px;color:#464c54">2021-11-23 10:00:00</div>
<div class="t" style="left:1571px;top:738px;font-size:14px;line-height:18px;color:#464c54">5.58 °C</div>
<div class="abs" style="left:1225px;top:763px;width:671px;height:1px;background:#e4e7ec"></div>
<div class="t" style="left:1231px;top:773px;font-size:14px;line-height:18px;color:#464c54">2021-11-23 11:00:00</div>
<div class="t" style="left:1571px;top:773px;font-size:14px;line-height:18px;color:#464c54">7.07 °C</div>
<div class="abs" style="left:1225px;top:798px;width:671px;height:1px;background:#e4e7ec"></div>
<div class="t" style="left:1231px;top:808px;font-size:14px;line-height:18px;color:#464c54">2021-11-23 12:00:00</div>
<div class="t" style="left:1571px;top:808px;font-size:14px;line-height:18px;color:#464c54">8.69 °C</div>
<div class="abs" style="left:1225px;top:833px;width:671px;height:1px;background:#e4e7ec"></div>
<div class="t" style="left:1231px;top:843px;font-size:14px;line-height:18px;color:#464c54">2021-11-23 13:00:00</div>
<div class="t" style="left:1571px;top:843px;font-size:14px;line-height:18px;color:#464c54">10.0 °C</div>
<div class="abs" style="left:1225px;top:868px;width:671px;height:1px;background:#e4e7ec"></div>
<div class="t" style="left:1231px;top:878px;font-size:14px;line-height:18px;color:#464c54">2021-11-23 14:00:00</div>
<div class="t" style="left:1571px;top:878px;font-size:14px;line-height:18px;color:#464c54">10.8 °C</div>
<div class="abs" style="left:1225px;top:903px;width:671px;height:1px;background:#e4e7ec"></div>
<div class="t" style="left:1231px;top:913px;font-size:14px;line-height:18px;color:#464c54">2021-11-23 15:00:00</div>
<div class="t" style="left:1571px;top:913px;font-size:14px;line-height:18px;color:#464c54">11.0 °C</div>
<div class="abs" style="left:1225px;top:938px;width:671px;height:1px;background:#e4e7ec"></div>
<div class="t" style="left:1231px;top:948px;font-size:14px;line-height:18px;color:#464c54">2021-11-23 16:00:00</div>
<div class="t" style="left:1571px;top:948px;font-size:14px;line-height:18px;color:#464c54">9.60 °C</div>
<div class="abs" style="left:1225px;top:973px;width:671px;height:1px;background:#e4e7ec"></div>
<div class="t" style="left:1231px;top:983px;font-size:14px;line-height:18px;color:#464c54">2021-11-23 17:00:00</div>
<div class="t" style="left:1571px;top:983px;font-size:14px;line-height:18px;color:#464c54">8.65 °C</div>
<div class="abs" style="left:1225px;top:1008px;width:671px;height:1px;background:#e4e7ec"></div>
<div class="t" style="left:1231px;top:1018px;font-size:14px;line-height:18px;color:#464c54">2021-11-23 18:00:00</div>
<div class="t" style="left:1571px;top:1018px;font-size:14px;line-height:18px;color:#464c54">7.87 °C</div>
<div class="abs" style="left:1897px;top:625px;width:5px;height:47px;background:#c8ccd3;border-radius:3px"></div>
</div></body></html>
